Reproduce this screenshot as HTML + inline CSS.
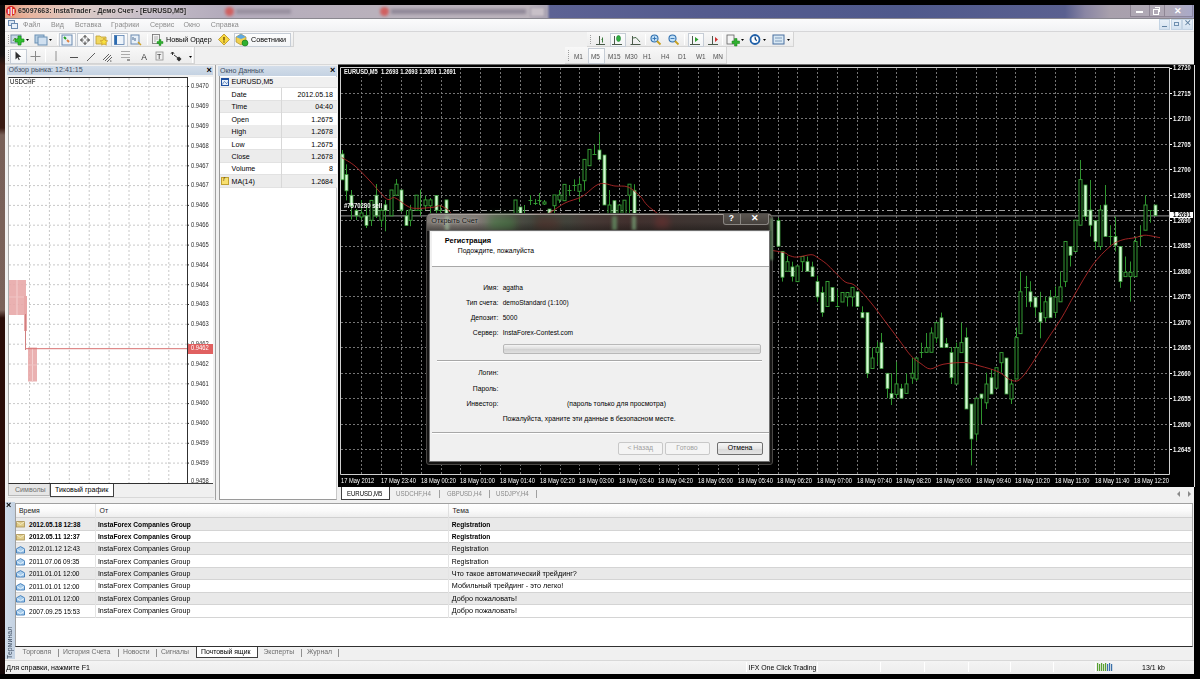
<!DOCTYPE html><html><head><meta charset="utf-8"><style>
html,body{margin:0;padding:0;}
body{width:1200px;height:679px;background:#000;position:relative;overflow:hidden;font-family:"Liberation Sans", sans-serif;}
.b{position:absolute;box-sizing:border-box;}
.t{position:absolute;white-space:nowrap;line-height:1.2;}
svg{position:absolute;}
</style></head><body><div style="position:absolute;left:0;top:0;width:1200px;height:679px;filter:blur(0.4px);">
<div class="b" style="left:0px;top:0px;width:5px;height:679px;background:linear-gradient(#0a0a0a 0,#151010 55px,#3a1a12 65px,#3a1a12 128px,#786058 135px,#7a625a 310px,#2a0c08 318px,#2a0c08 560px,#140808 679px);"></div>
<div class="b" style="left:0px;top:0px;width:1200px;height:5px;background:#000;"></div>
<div class="b" style="left:5px;top:5px;width:1189px;height:13px;background:linear-gradient(90deg,#e39a7c 0px,#e8b49e 25px,#dccac6 75px,#c4bcc8 145px,#b4acbc 215px,#bab2bc 400px,#bcb4bc 525px,#aaa4b4 542px,#5c6294 545px,#545b8e 700px,#4f598c 900px,#5a6090 1060px,#8a86a4 1080px,#a8a0ac 1105px,#aaa2b0 1160px,#a0a0c4 1189px);"></div>
<div class="b" style="left:6px;top:6px;width:10px;height:10px;border-radius:50%;background:#d42020;"></div>
<div class="t" style="left:7.5px;top:5.5px;font-size:9px;color:#fff;font-weight:bold;">ı|ı</div>
<div class="t" style="left:18px;top:7.15px;font-size:7.25px;color:#2a2a2a;font-weight:bold;text-shadow:0 0 3px rgba(255,240,230,0.6);transform:scaleX(0.966);transform-origin:left center;">65097663: InstaTrader - Демо Счет - [EURUSD,M5]</div>
<div class="b" style="left:225px;top:7px;width:9px;height:9px;border-radius:50%;background:#d06060;filter:blur(1.6px);"></div>
<div class="b" style="left:236px;top:9px;width:55px;height:5px;background:#9890a0;filter:blur(1.5px);"></div>
<div class="b" style="left:380px;top:7px;width:9px;height:9px;border-radius:50%;background:#d06060;filter:blur(1.6px);"></div>
<div class="b" style="left:530px;top:7px;width:15px;height:10px;background:#c8c0c8;border:1px solid #a098a8;filter:blur(0.8px);"></div>
<div class="b" style="left:391px;top:9px;width:135px;height:5px;background:#908898;filter:blur(1.5px);"></div>
<div class="b" style="left:1130px;top:5px;width:20px;height:12px;background:rgba(255,255,255,0.08);border:1px solid rgba(80,70,90,0.35);border-top:none;"></div>
<div class="b" style="left:1150px;top:5px;width:15px;height:12px;background:rgba(255,255,255,0.08);border:1px solid rgba(80,70,90,0.35);border-top:none;border-left:none;"></div>
<div class="b" style="left:1165px;top:5px;width:28px;height:12px;background:rgba(255,255,255,0.10);border:1px solid rgba(80,70,90,0.35);border-top:none;border-left:none;"></div>
<div class="b" style="left:1136px;top:11px;width:7px;height:2px;background:#fff;"></div>
<div class="b" style="left:1152.5px;top:9px;width:6px;height:5.5px;border:1.5px solid #fff;"></div>
<div class="b" style="left:1155px;top:7px;width:5px;height:5px;border-top:1.2px solid #fff;border-right:1.2px solid #fff;"></div>
<div class="t" style="left:1174px;top:5.5px;font-size:9px;color:#fff;font-weight:bold;">✕</div>
<div class="b" style="left:5px;top:18px;width:1189px;height:14px;background:linear-gradient(#fbfbfc,#f1f2f4);border-top:1px solid #8a8890;border-bottom:1px solid #d6d6d8;"></div>
<div class="b" style="left:8px;top:20px;width:7px;height:6px;border:1px solid #6a8ab0;background:#dce8f4;"></div>
<div class="b" style="left:11px;top:23px;width:7px;height:6px;border:1px solid #6a8ab0;background:#e8f0f8;"></div>
<div class="t" style="left:23px;top:20.74px;font-size:7.1px;color:#8c8c8c;">Файл</div>
<div class="t" style="left:51px;top:20.74px;font-size:7.1px;color:#8c8c8c;">Вид</div>
<div class="t" style="left:75px;top:20.74px;font-size:7.1px;color:#8c8c8c;">Вставка</div>
<div class="t" style="left:111px;top:20.74px;font-size:7.1px;color:#8c8c8c;">Графики</div>
<div class="t" style="left:150px;top:20.74px;font-size:7.1px;color:#8c8c8c;">Сервис</div>
<div class="t" style="left:183.5px;top:20.74px;font-size:7.1px;color:#8c8c8c;">Окно</div>
<div class="t" style="left:210.8px;top:20.74px;font-size:7.1px;color:#8c8c8c;">Справка</div>
<div class="b" style="left:1159px;top:19px;width:11px;height:11px;background:linear-gradient(#e8f0f8,#d4e2f0);border:1px solid #c4d4e4;"></div>
<div class="b" style="left:1171px;top:19px;width:11px;height:11px;background:linear-gradient(#e8f0f8,#d4e2f0);border:1px solid #c4d4e4;"></div>
<div class="b" style="left:1182px;top:19px;width:11px;height:11px;background:linear-gradient(#e8f0f8,#d4e2f0);border:1px solid #c4d4e4;"></div>
<div class="b" style="left:1162px;top:26px;width:5px;height:1px;background:#6080a0;"></div>
<div class="b" style="left:1174px;top:22px;width:5px;height:4px;border:1px solid #7090b0;"></div>
<div class="t" style="left:1184px;top:18px;font-size:9px;color:#6080a0;">✕</div>
<div class="b" style="left:5px;top:32px;width:1189px;height:33px;background:#f0f0f0;"></div>
<div class="b" style="left:5px;top:64px;width:1189px;height:1px;background:#d8d8d8;"></div>
<div class="b" style="left:5px;top:32px;width:289px;height:15px;background:linear-gradient(#f8f8f8,#ececec);border-right:1px solid #d4d4d4;border-bottom:1px solid #d4d4d4;"></div>
<div class="b" style="left:8px;top:35px;width:1px;height:9px;border-left:1px dotted #a0a0a0;"></div>
<div class="b" style="left:5px;top:47px;width:190px;height:17px;background:linear-gradient(#f8f8f8,#ececec);border-right:1px solid #d4d4d4;border-bottom:1px solid #d4d4d4;"></div>
<div class="b" style="left:8px;top:50px;width:1px;height:11px;border-left:1px dotted #a0a0a0;"></div>
<div class="b" style="left:587px;top:32px;width:207px;height:15px;background:linear-gradient(#f8f8f8,#ececec);border-right:1px solid #d4d4d4;border-bottom:1px solid #d4d4d4;"></div>
<div class="b" style="left:590px;top:35px;width:1px;height:9px;border-left:1px dotted #a0a0a0;"></div>
<div class="b" style="left:565px;top:47px;width:162px;height:17px;background:linear-gradient(#f8f8f8,#ececec);border-right:1px solid #d4d4d4;border-bottom:1px solid #d4d4d4;"></div>
<div class="b" style="left:568px;top:50px;width:1px;height:11px;border-left:1px dotted #a0a0a0;"></div>
<div class="b" style="left:57px;top:34px;width:1px;height:11px;background:#c8c8c8;border-right:1px solid #fff;"></div>
<div class="b" style="left:147px;top:34px;width:1px;height:11px;background:#c8c8c8;border-right:1px solid #fff;"></div>
<div class="b" style="left:45px;top:49px;width:1px;height:13px;background:#c8c8c8;border-right:1px solid #fff;"></div>
<div class="b" style="left:192px;top:48px;width:1px;height:15px;background:#c8c8c8;border-right:1px solid #fff;"></div>
<div class="b" style="left:645px;top:34px;width:1px;height:11px;background:#c8c8c8;border-right:1px solid #fff;"></div>
<div class="b" style="left:684px;top:34px;width:1px;height:11px;background:#c8c8c8;border-right:1px solid #fff;"></div>
<div class="b" style="left:722px;top:34px;width:1px;height:11px;background:#c8c8c8;border-right:1px solid #fff;"></div>
<div class="b" style="left:59px;top:33px;width:17px;height:14px;border:1px solid #c6cdd6;background:linear-gradient(#fdfdfd,#f2f4f6);"></div>
<div class="b" style="left:77px;top:33px;width:17px;height:14px;border:1px solid #c6cdd6;background:linear-gradient(#fdfdfd,#f2f4f6);"></div>
<div class="b" style="left:111px;top:33px;width:17px;height:14px;border:1px solid #c6cdd6;background:linear-gradient(#fdfdfd,#f2f4f6);"></div>
<div class="b" style="left:234px;top:33px;width:57px;height:14px;border:1px solid #c6cdd6;background:linear-gradient(#fdfdfd,#f2f4f6);"></div>
<div class="b" style="left:10px;top:49px;width:17px;height:15px;border:1px solid #c6cdd6;background:linear-gradient(#fdfdfd,#f2f4f6);"></div>
<div class="b" style="left:610px;top:33px;width:16px;height:14px;border:1px solid #c6cdd6;background:linear-gradient(#fdfdfd,#f2f4f6);"></div>
<div class="b" style="left:688px;top:33px;width:16px;height:14px;border:1px solid #c6cdd6;background:linear-gradient(#fdfdfd,#f2f4f6);"></div>
<div class="b" style="left:588px;top:48px;width:17px;height:16px;border:1px solid #c6cdd6;background:linear-gradient(#fdfdfd,#f2f4f6);"></div>
<svg style="left:0;top:0" width="1200" height="70" viewBox="0 0 1200 70">
<g>
<!-- new chart -->
<rect x="11" y="35" width="10" height="8" fill="#c8d8e8" stroke="#7890a8" stroke-width="1"/>
<path d="M13 41 L15 38 L17 40 L19 37" stroke="#5a8a3a" fill="none"/>
<path d="M19 37 h3 v3 h3 v3 h-3 v3 h-3 v-3 h-3 v-3 h3z" fill="#30c030" stroke="#189018" stroke-width="0.7" transform="translate(-1,-1)"/>
<path d="M26 39 h3 l-1.5 2z" fill="#000"/>
<!-- profiles -->
<rect x="35" y="35" width="9" height="8" fill="#b8d0e4" stroke="#6a90b4"/>
<rect x="38" y="37" width="9" height="8" fill="#d0e0f0" stroke="#6a90b4"/>
<path d="M49 39 h3 l-1.5 2z" fill="#000"/>
<!-- market watch -->
<rect x="62" y="35" width="10" height="10" fill="#e8f0f8" stroke="#6a8ab0"/>
<path d="M64 37 l2 2" stroke="#20a020" stroke-width="2"/><path d="M67 40 l2 2" stroke="#e08040" stroke-width="2"/>
<!-- crosshair -->
<path d="M85 35.5 v3 M85 41.5 v3 M80.5 40 h3 M86.5 40 h3" stroke="#303030" stroke-width="1"/>
<path d="M83 37.5 L85 35.5 L87 37.5 M83 42.5 L85 44.5 L87 42.5 M82.5 38 L80.5 40 L82.5 42 M87.5 38 L89.5 40 L87.5 42" stroke="#404040" stroke-width="0.9" fill="none"/>
<!-- folder star -->
<path d="M96 36 h4 l1 1 h5 v7 h-10z" fill="#f0d860" stroke="#c0a030" stroke-width="0.8"/>
<path d="M104 38 l1.2 2.5 2.6 .3 -2 1.8 .6 2.6 -2.4 -1.3 -2.4 1.3 .6 -2.6 -2 -1.8 2.6 -.3z" fill="#f8e040" stroke="#c09020" stroke-width="0.6"/>
<!-- navigator -->
<rect x="114.5" y="35.5" width="9.5" height="9" fill="#eef4fa" stroke="#5a80b0" stroke-width="0.8"/>
<rect x="114.5" y="35.5" width="2.5" height="9" fill="#2a6ab0"/>
<!-- tester -->
<rect x="131" y="35" width="8" height="9" fill="#e8f0f8" stroke="#6a8ab0"/>
<path d="M133 37 v3 M135 38 v3" stroke="#4a6a90"/>
<path d="M138 42 l3 3" stroke="#d0a020" stroke-width="1.5"/>
<!-- new order -->
<rect x="152.5" y="34.5" width="7" height="9" fill="#f4f4f4" stroke="#707070" stroke-width="0.8"/>
<path d="M154 37 h4 M154 39 h4 M154 41 h2" stroke="#909090" stroke-width="0.7"/>
<path d="M157 41.5 h2 v-2 h2 v2 h2 v2 h-2 v2 h-2 v-2 h-2z" fill="#30b030" stroke="#108010" stroke-width="0.4"/>
<!-- diamond -->
<path d="M224 34 l5.5 5.5 -5.5 5.5 -5.5 -5.5z" fill="#f8d840" stroke="#b89020" stroke-width="0.8"/>
<path d="M224 37 v3.5" stroke="#604000" stroke-width="1.3"/><circle cx="224" cy="42" r="0.7" fill="#604000"/>
<!-- experts -->
<path d="M236 37 l5 -3 5 3 v5 l-5 3 -5 -3z" fill="#f0d050" stroke="#a08020" stroke-width="0.6"/>
<path d="M236 37 l5 -3 5 3 -5 2z" fill="#60a8e0"/>
<circle cx="245" cy="43" r="3" fill="#30b030" stroke="#107010" stroke-width="0.6"/>
</g>
<g>
<!-- toolbar 2 -->
<path d="M15.5 51.5 v8 l2 -2 1.3 2.8 1 -.5 -1.3 -2.7 h2.8z" fill="#303030"/>
<path d="M35.5 51 v10 M30.5 56.5 h10" stroke="#8a8a8a" stroke-width="1"/>
<path d="M56 51 v10" stroke="#909090" stroke-width="1"/>
<path d="M70 57.5 h8" stroke="#505050" stroke-width="1"/>
<path d="M87 61 l8 -8" stroke="#606060" stroke-width="1"/>
<path d="M103 60 l6 -6 M105 61 l6 -6 M107 62 l5 -5" stroke="#505050" stroke-width="0.9"/>
<text x="110" y="62" font-size="4" fill="#303030" font-family="Liberation Sans">c</text>
<path d="M121 51.5 h9 M121 54.5 h9 M121 57.5 h9" stroke="#8a8a8a" stroke-width="0.7"/><path d="M127 60 h3" stroke="#404040" stroke-width="1"/>
<text x="141.3" y="60.3" font-size="8.5" fill="#303030" font-family="Liberation Sans">A</text>
<rect x="156" y="52" width="7" height="8" fill="#f0f0f0" stroke="#909090" stroke-width="0.8"/>
<text x="157" y="59" font-size="7" fill="#202020" font-family="Liberation Sans">T</text>
<path d="M172.5 52 v3 M171 53.5 l1.5 -1.5 1.5 1.5 M174 55 l4 3" stroke="#303030" stroke-width="1"/><path d="M179 56.5 l2.5 2.5 -2.5 2.5 -2.5 -2.5z" fill="#303030"/>
<path d="M189 56 h3 l-1.5 2z" fill="#000"/>
</g>
<g>
<!-- right toolbar -->
<path d="M599.5 36 v8.5 M596 44.5 h9" stroke="#4a5a4a" stroke-width="1"/>
<path d="M602.5 37.5 v5 M601.5 39.5 h1" stroke="#3a7a3a" stroke-width="1"/>
<path d="M614.5 36 v8.5 M612 44.5 h10" stroke="#4a5a4a" stroke-width="1"/>
<ellipse cx="618.5" cy="38.5" rx="2" ry="3" fill="#30b040" stroke="#208030" stroke-width="0.6"/>
<path d="M632.5 36 v8.5 M630.5 44.5 h10" stroke="#4a5a4a" stroke-width="1"/>
<path d="M633 38 L636 37.5 L640 42" stroke="#4a6a4a" stroke-width="1" fill="none"/>
<circle cx="654.5" cy="38.5" r="3.5" fill="#c0e0f8" stroke="#3070b0" stroke-width="1.1"/>
<path d="M657 41 l3.5 3.5" stroke="#c8a020" stroke-width="1.8"/>
<path d="M652.5 38.5 h4 M654.5 36.5 v4" stroke="#3070b0" stroke-width="0.9"/>
<circle cx="672.5" cy="38.5" r="3.5" fill="#c0e0f8" stroke="#3070b0" stroke-width="1.1"/>
<path d="M675 41 l3.5 3.5" stroke="#c8a020" stroke-width="1.8"/>
<path d="M670.5 38.5 h4" stroke="#3070b0" stroke-width="0.9"/>
<path d="M690 44.5 h10 M692.5 36 v8.5" stroke="#4a5a4a" stroke-width="1"/>
<path d="M695 37 l3.5 2.5 -3.5 2.5z" fill="#30a030"/>
<path d="M708 44.5 h10 M712.5 36 v8.5" stroke="#4a5a4a" stroke-width="1"/>
<path d="M715 37 l3 2.5 -3 2.5z" fill="#d03030"/>
<rect x="727" y="35" width="7" height="9" fill="#f4f4f4" stroke="#606060" stroke-width="0.8"/>
<path d="M732 41 h2.5 v-2.5 h2.5 v2.5 h2.5 v2.5 h-2.5 v2.5 h-2.5 v-2.5 h-2.5z" fill="#30b030" stroke="#108010" stroke-width="0.5"/>
<path d="M741 39 h3 l-1.5 2z" fill="#000"/>
<circle cx="755" cy="39.5" r="4.5" fill="#fff" stroke="#2060a8" stroke-width="1.8"/>
<path d="M755 36.5 v3 l2 1.5" stroke="#2060a8" stroke-width="1"/>
<path d="M763 39 h3 l-1.5 2z" fill="#000"/>
<rect x="773" y="35" width="11" height="9" fill="#d8e8f4" stroke="#4a70a0" stroke-width="1"/>
<path d="M775 38 h7 M775 41 h7" stroke="#6a8ab0" stroke-width="0.8"/>
<path d="M787 39 h3 l-1.5 2z" fill="#000"/>
</g>
</svg>
<div class="t" style="left:166px;top:36.48px;font-size:7.2px;color:#000;">Новый Ордер</div>
<div class="t" style="left:251px;top:36.48px;font-size:7.2px;color:#000;">Советники</div>
<div class="t" style="left:574px;top:53.10px;font-size:7px;color:#505050;transform:scaleX(0.92);transform-origin:left center;">M1</div>
<div class="t" style="left:591px;top:53.10px;font-size:7px;color:#505050;transform:scaleX(0.92);transform-origin:left center;">M5</div>
<div class="t" style="left:607.5px;top:53.10px;font-size:7px;color:#505050;transform:scaleX(0.92);transform-origin:left center;">M15</div>
<div class="t" style="left:624.7px;top:53.10px;font-size:7px;color:#505050;transform:scaleX(0.92);transform-origin:left center;">M30</div>
<div class="t" style="left:643.4px;top:53.10px;font-size:7px;color:#505050;transform:scaleX(0.92);transform-origin:left center;">H1</div>
<div class="t" style="left:661px;top:53.10px;font-size:7px;color:#505050;transform:scaleX(0.92);transform-origin:left center;">H4</div>
<div class="t" style="left:678.4px;top:53.10px;font-size:7px;color:#505050;transform:scaleX(0.92);transform-origin:left center;">D1</div>
<div class="t" style="left:696px;top:53.10px;font-size:7px;color:#505050;transform:scaleX(0.92);transform-origin:left center;">W1</div>
<div class="t" style="left:712.6px;top:53.10px;font-size:7px;color:#505050;transform:scaleX(0.92);transform-origin:left center;">MN</div>
<div class="b" style="left:5px;top:65px;width:210px;height:435px;background:#f0f0f0;"></div>
<div class="b" style="left:7px;top:65.5px;width:206px;height:9.5px;background:linear-gradient(#d4deea,#c4d2e2);"></div>
<div class="t" style="left:8.5px;top:66.04px;font-size:7.1px;color:#3e4c60;">Обзор рынка: 12:41:15</div>
<div class="t" style="left:206.5px;top:64.90px;font-size:9px;color:#000;font-weight:bold;">×</div>
<div class="b" style="left:8px;top:76.5px;width:205px;height:407px;background:#fff;border-bottom:1px solid #404040;"></div>
<div class="b" style="left:8px;top:76.5px;width:180px;height:407px;border-top:1.5px solid #303030;border-left:1px solid #a8a8a8;border-right:1px solid #303030;border-bottom:1px solid #303030;"></div>
<svg style="left:0;top:0" width="215" height="500" viewBox="0 0 215 500"><path d="M29.5 78 V483" stroke="#c8c8c8" stroke-width="1" stroke-dasharray="2,2"/><path d="M49.4 78 V483" stroke="#c8c8c8" stroke-width="1" stroke-dasharray="2,2"/><path d="M69.3 78 V483" stroke="#c8c8c8" stroke-width="1" stroke-dasharray="2,2"/><path d="M89.2 78 V483" stroke="#c8c8c8" stroke-width="1" stroke-dasharray="2,2"/><path d="M109.1 78 V483" stroke="#c8c8c8" stroke-width="1" stroke-dasharray="2,2"/><path d="M129.0 78 V483" stroke="#c8c8c8" stroke-width="1" stroke-dasharray="2,2"/><path d="M148.9 78 V483" stroke="#c8c8c8" stroke-width="1" stroke-dasharray="2,2"/><path d="M168.8 78 V483" stroke="#c8c8c8" stroke-width="1" stroke-dasharray="2,2"/><path d="M9 86.5 H187" stroke="#c8c8c8" stroke-width="1" stroke-dasharray="2,2"/><path d="M187 86.5 h2" stroke="#303030" stroke-width="1"/><path d="M9 106.3 H187" stroke="#c8c8c8" stroke-width="1" stroke-dasharray="2,2"/><path d="M187 106.3 h2" stroke="#303030" stroke-width="1"/><path d="M9 126.1 H187" stroke="#c8c8c8" stroke-width="1" stroke-dasharray="2,2"/><path d="M187 126.1 h2" stroke="#303030" stroke-width="1"/><path d="M9 146.0 H187" stroke="#c8c8c8" stroke-width="1" stroke-dasharray="2,2"/><path d="M187 146.0 h2" stroke="#303030" stroke-width="1"/><path d="M9 165.8 H187" stroke="#c8c8c8" stroke-width="1" stroke-dasharray="2,2"/><path d="M187 165.8 h2" stroke="#303030" stroke-width="1"/><path d="M9 185.6 H187" stroke="#c8c8c8" stroke-width="1" stroke-dasharray="2,2"/><path d="M187 185.6 h2" stroke="#303030" stroke-width="1"/><path d="M9 205.4 H187" stroke="#c8c8c8" stroke-width="1" stroke-dasharray="2,2"/><path d="M187 205.4 h2" stroke="#303030" stroke-width="1"/><path d="M9 225.2 H187" stroke="#c8c8c8" stroke-width="1" stroke-dasharray="2,2"/><path d="M187 225.2 h2" stroke="#303030" stroke-width="1"/><path d="M9 245.1 H187" stroke="#c8c8c8" stroke-width="1" stroke-dasharray="2,2"/><path d="M187 245.1 h2" stroke="#303030" stroke-width="1"/><path d="M9 264.9 H187" stroke="#c8c8c8" stroke-width="1" stroke-dasharray="2,2"/><path d="M187 264.9 h2" stroke="#303030" stroke-width="1"/><path d="M9 284.7 H187" stroke="#c8c8c8" stroke-width="1" stroke-dasharray="2,2"/><path d="M187 284.7 h2" stroke="#303030" stroke-width="1"/><path d="M9 304.5 H187" stroke="#c8c8c8" stroke-width="1" stroke-dasharray="2,2"/><path d="M187 304.5 h2" stroke="#303030" stroke-width="1"/><path d="M9 324.3 H187" stroke="#c8c8c8" stroke-width="1" stroke-dasharray="2,2"/><path d="M187 324.3 h2" stroke="#303030" stroke-width="1"/><path d="M9 344.2 H187" stroke="#c8c8c8" stroke-width="1" stroke-dasharray="2,2"/><path d="M187 344.2 h2" stroke="#303030" stroke-width="1"/><path d="M9 364.0 H187" stroke="#c8c8c8" stroke-width="1" stroke-dasharray="2,2"/><path d="M187 364.0 h2" stroke="#303030" stroke-width="1"/><path d="M9 383.8 H187" stroke="#c8c8c8" stroke-width="1" stroke-dasharray="2,2"/><path d="M187 383.8 h2" stroke="#303030" stroke-width="1"/><path d="M9 403.6 H187" stroke="#c8c8c8" stroke-width="1" stroke-dasharray="2,2"/><path d="M187 403.6 h2" stroke="#303030" stroke-width="1"/><path d="M9 423.4 H187" stroke="#c8c8c8" stroke-width="1" stroke-dasharray="2,2"/><path d="M187 423.4 h2" stroke="#303030" stroke-width="1"/><path d="M9 443.3 H187" stroke="#c8c8c8" stroke-width="1" stroke-dasharray="2,2"/><path d="M187 443.3 h2" stroke="#303030" stroke-width="1"/><path d="M9 463.1 H187" stroke="#c8c8c8" stroke-width="1" stroke-dasharray="2,2"/><path d="M187 463.1 h2" stroke="#303030" stroke-width="1"/><rect x="9" y="280" width="17" height="35" fill="#e8a8a8" opacity="0.9"/><path d="M17 280 v35" stroke="#f4d0d0" stroke-width="1"/><path d="M9 297 h17" stroke="#f0c4c4" stroke-width="1"/><rect x="24" y="296" width="3" height="35" fill="#e8a8a8"/><path d="M25.5 314 v36" stroke="#d08080" stroke-width="1"/><rect x="28" y="347.5" width="9" height="34" fill="#e8a8a8" opacity="0.9"/><path d="M32.5 348 v34" stroke="#f4d0d0" stroke-width="1"/><path d="M28 365 h9" stroke="#f0c4c4" stroke-width="1"/><path d="M26 348.7 H187" stroke="#d87070" stroke-width="1"/></svg>
<div class="t" style="left:191px;top:82.36px;font-size:6.9px;color:#303030;transform:scaleX(0.84);transform-origin:left center;">0.9470</div>
<div class="t" style="left:191px;top:102.18px;font-size:6.9px;color:#303030;transform:scaleX(0.84);transform-origin:left center;">0.9469</div>
<div class="t" style="left:191px;top:122.00px;font-size:6.9px;color:#303030;transform:scaleX(0.84);transform-origin:left center;">0.9469</div>
<div class="t" style="left:191px;top:141.82px;font-size:6.9px;color:#303030;transform:scaleX(0.84);transform-origin:left center;">0.9468</div>
<div class="t" style="left:191px;top:161.64px;font-size:6.9px;color:#303030;transform:scaleX(0.84);transform-origin:left center;">0.9467</div>
<div class="t" style="left:191px;top:181.46px;font-size:6.9px;color:#303030;transform:scaleX(0.84);transform-origin:left center;">0.9467</div>
<div class="t" style="left:191px;top:201.28px;font-size:6.9px;color:#303030;transform:scaleX(0.84);transform-origin:left center;">0.9466</div>
<div class="t" style="left:191px;top:221.10px;font-size:6.9px;color:#303030;transform:scaleX(0.84);transform-origin:left center;">0.9466</div>
<div class="t" style="left:191px;top:240.92px;font-size:6.9px;color:#303030;transform:scaleX(0.84);transform-origin:left center;">0.9465</div>
<div class="t" style="left:191px;top:260.74px;font-size:6.9px;color:#303030;transform:scaleX(0.84);transform-origin:left center;">0.9464</div>
<div class="t" style="left:191px;top:280.56px;font-size:6.9px;color:#303030;transform:scaleX(0.84);transform-origin:left center;">0.9464</div>
<div class="t" style="left:191px;top:300.38px;font-size:6.9px;color:#303030;transform:scaleX(0.84);transform-origin:left center;">0.9463</div>
<div class="t" style="left:191px;top:320.20px;font-size:6.9px;color:#303030;transform:scaleX(0.84);transform-origin:left center;">0.9463</div>
<div class="t" style="left:191px;top:339.56px;font-size:6.9px;color:#303030;transform:scaleX(0.84);transform-origin:left center;">0.9462</div>
<div class="t" style="left:191px;top:359.84px;font-size:6.9px;color:#303030;transform:scaleX(0.84);transform-origin:left center;">0.9462</div>
<div class="t" style="left:191px;top:379.66px;font-size:6.9px;color:#303030;transform:scaleX(0.84);transform-origin:left center;">0.9461</div>
<div class="t" style="left:191px;top:399.48px;font-size:6.9px;color:#303030;transform:scaleX(0.84);transform-origin:left center;">0.9460</div>
<div class="t" style="left:191px;top:419.30px;font-size:6.9px;color:#303030;transform:scaleX(0.84);transform-origin:left center;">0.9460</div>
<div class="t" style="left:191px;top:439.12px;font-size:6.9px;color:#303030;transform:scaleX(0.84);transform-origin:left center;">0.9459</div>
<div class="t" style="left:191px;top:458.94px;font-size:6.9px;color:#303030;transform:scaleX(0.84);transform-origin:left center;">0.9459</div>
<div class="t" style="left:191px;top:476.86px;font-size:6.9px;color:#303030;transform:scaleX(0.84);transform-origin:left center;">0.9458</div>
<div class="b" style="left:188px;top:343.5px;width:25px;height:10px;background:#e06060;"></div>
<div class="t" style="left:191px;top:344.36px;font-size:6.9px;color:#fff;transform:scaleX(0.84);transform-origin:left center;">0.9462</div>
<div class="t" style="left:10.3px;top:77.94px;font-size:7.1px;color:#000;transform:scaleX(0.86);transform-origin:left center;">USDCHF</div>
<div class="b" style="left:8px;top:484px;width:206px;height:13px;background:#f0f0f0;"></div>
<div class="b" style="left:49.5px;top:484px;width:64.5px;height:12.5px;background:#fff;border:1px solid #404040;border-top:none;border-bottom-width:1.5px;"></div>
<div class="b" style="left:7.5px;top:484px;width:42px;height:12px;background:#e6e6e6;border:1px solid #b8b8b8;border-top:none;"></div>
<div class="t" style="left:15px;top:486.24px;font-size:7.1px;color:#707070;">Символы</div>
<div class="t" style="left:55px;top:486.24px;font-size:7.1px;color:#000;">Тиковый график</div>
<div class="b" style="left:8px;top:497px;width:206px;height:1px;background:#d8d8d8;"></div>
<div class="b" style="left:215px;top:65px;width:1px;height:435px;background:#a0a0a0;"></div>
<div class="b" style="left:216px;top:65px;width:122px;height:435px;background:#f0f0f0;"></div>
<div class="b" style="left:218px;top:66px;width:119px;height:9.5px;background:linear-gradient(#d4deea,#c4d2e2);"></div>
<div class="t" style="left:220px;top:66.54px;font-size:7.1px;color:#3e4c60;">Окно Данных</div>
<div class="t" style="left:330px;top:65.40px;font-size:9px;color:#000;font-weight:bold;">×</div>
<div class="b" style="left:218.5px;top:76px;width:118.5px;height:424px;background:#fff;border-left:1px solid #9a9a9a;border-right:1px solid #c8c8c8;border-bottom:1px solid #9a9a9a;"></div>
<div class="b" style="left:219.5px;top:76.5px;width:117px;height:11.7px;background:#f0f0f0;border-bottom:1px solid #e0e0e0;"></div>
<div class="b" style="left:221px;top:78px;width:8px;height:8px;border:1px solid #2050a0;background:#e8f0fa;"></div>
<div class="b" style="left:221px;top:78px;width:8px;height:2px;background:#2050a0;"></div>
<svg style="left:221px;top:78px" width="9" height="9" viewBox="0 0 9 9"><path d="M1.5 6.5 Q3 2 4.5 4.5 T7.5 3" stroke="#3a6ab0" stroke-width="0.8" fill="none"/></svg>
<div class="t" style="left:231.5px;top:77.74px;font-size:7.1px;color:#000;">EURUSD,M5</div>
<div class="b" style="left:219.5px;top:88.2px;width:117px;height:12.5px;background:#ffffff;border-bottom:1px solid #e2e2e2;"></div>
<div class="t" style="left:231.6px;top:90.94px;font-size:7.1px;color:#000;">Date</div>
<div class="t" style="right:867px;top:90.94px;font-size:7.1px;color:#000;">2012.05.18</div>
<div class="b" style="left:219.5px;top:100.62px;width:117px;height:12.5px;background:#ececec;border-bottom:1px solid #e2e2e2;"></div>
<div class="t" style="left:231.6px;top:103.36px;font-size:7.1px;color:#000;">Time</div>
<div class="t" style="right:867px;top:103.36px;font-size:7.1px;color:#000;">04:40</div>
<div class="b" style="left:219.5px;top:113.04px;width:117px;height:12.5px;background:#ffffff;border-bottom:1px solid #e2e2e2;"></div>
<div class="t" style="left:231.6px;top:115.78px;font-size:7.1px;color:#000;">Open</div>
<div class="t" style="right:867px;top:115.78px;font-size:7.1px;color:#000;">1.2675</div>
<div class="b" style="left:219.5px;top:125.46000000000001px;width:117px;height:12.5px;background:#ececec;border-bottom:1px solid #e2e2e2;"></div>
<div class="t" style="left:231.6px;top:128.20px;font-size:7.1px;color:#000;">High</div>
<div class="t" style="right:867px;top:128.20px;font-size:7.1px;color:#000;">1.2678</div>
<div class="b" style="left:219.5px;top:137.88px;width:117px;height:12.5px;background:#ffffff;border-bottom:1px solid #e2e2e2;"></div>
<div class="t" style="left:231.6px;top:140.62px;font-size:7.1px;color:#000;">Low</div>
<div class="t" style="right:867px;top:140.62px;font-size:7.1px;color:#000;">1.2675</div>
<div class="b" style="left:219.5px;top:150.3px;width:117px;height:12.5px;background:#ececec;border-bottom:1px solid #e2e2e2;"></div>
<div class="t" style="left:231.6px;top:153.04px;font-size:7.1px;color:#000;">Close</div>
<div class="t" style="right:867px;top:153.04px;font-size:7.1px;color:#000;">1.2678</div>
<div class="b" style="left:219.5px;top:162.72px;width:117px;height:12.5px;background:#ffffff;border-bottom:1px solid #e2e2e2;"></div>
<div class="t" style="left:231.6px;top:165.46px;font-size:7.1px;color:#000;">Volume</div>
<div class="t" style="right:867px;top:165.46px;font-size:7.1px;color:#000;">8</div>
<div class="b" style="left:219.5px;top:175.14px;width:117px;height:12.5px;background:#ececec;border-bottom:1px solid #e2e2e2;"></div>
<div class="t" style="left:231.6px;top:177.88px;font-size:7.1px;color:#000;">MA(14)</div>
<div class="t" style="right:867px;top:177.88px;font-size:7.1px;color:#000;">1.2684</div>
<div class="b" style="left:280.5px;top:88.2px;width:1px;height:99.5px;background:#d8d8d8;"></div>
<div class="b" style="left:221px;top:177.2px;width:8px;height:8px;background:#f8e070;border:1px solid #c0a030;"></div>
<div class="t" style="left:223px;top:175.8px;font-size:6px;color:#604000;font-style:italic;">f</div>
<svg style="left:0;top:0" width="1200" height="500" viewBox="0 0 1200 500"><rect x="338" y="64.5" width="856" height="422.5" fill="#000"/><path d="M361.5 68 V474" stroke="#747474" stroke-width="1" stroke-dasharray="2,2"/><path d="M381.5 68 V474" stroke="#747474" stroke-width="1" stroke-dasharray="2,2"/><path d="M401.5 68 V474" stroke="#747474" stroke-width="1" stroke-dasharray="2,2"/><path d="M421.5 68 V474" stroke="#747474" stroke-width="1" stroke-dasharray="2,2"/><path d="M441.5 68 V474" stroke="#747474" stroke-width="1" stroke-dasharray="2,2"/><path d="M460.5 68 V474" stroke="#747474" stroke-width="1" stroke-dasharray="2,2"/><path d="M480.5 68 V474" stroke="#747474" stroke-width="1" stroke-dasharray="2,2"/><path d="M500.5 68 V474" stroke="#747474" stroke-width="1" stroke-dasharray="2,2"/><path d="M520.5 68 V474" stroke="#747474" stroke-width="1" stroke-dasharray="2,2"/><path d="M540.5 68 V474" stroke="#747474" stroke-width="1" stroke-dasharray="2,2"/><path d="M560.5 68 V474" stroke="#747474" stroke-width="1" stroke-dasharray="2,2"/><path d="M579.5 68 V474" stroke="#747474" stroke-width="1" stroke-dasharray="2,2"/><path d="M599.5 68 V474" stroke="#747474" stroke-width="1" stroke-dasharray="2,2"/><path d="M619.5 68 V474" stroke="#747474" stroke-width="1" stroke-dasharray="2,2"/><path d="M639.5 68 V474" stroke="#747474" stroke-width="1" stroke-dasharray="2,2"/><path d="M659.5 68 V474" stroke="#747474" stroke-width="1" stroke-dasharray="2,2"/><path d="M678.5 68 V474" stroke="#747474" stroke-width="1" stroke-dasharray="2,2"/><path d="M698.5 68 V474" stroke="#747474" stroke-width="1" stroke-dasharray="2,2"/><path d="M718.5 68 V474" stroke="#747474" stroke-width="1" stroke-dasharray="2,2"/><path d="M738.5 68 V474" stroke="#747474" stroke-width="1" stroke-dasharray="2,2"/><path d="M758.5 68 V474" stroke="#747474" stroke-width="1" stroke-dasharray="2,2"/><path d="M778.5 68 V474" stroke="#747474" stroke-width="1" stroke-dasharray="2,2"/><path d="M797.5 68 V474" stroke="#747474" stroke-width="1" stroke-dasharray="2,2"/><path d="M817.5 68 V474" stroke="#747474" stroke-width="1" stroke-dasharray="2,2"/><path d="M837.5 68 V474" stroke="#747474" stroke-width="1" stroke-dasharray="2,2"/><path d="M857.5 68 V474" stroke="#747474" stroke-width="1" stroke-dasharray="2,2"/><path d="M877.5 68 V474" stroke="#747474" stroke-width="1" stroke-dasharray="2,2"/><path d="M896.5 68 V474" stroke="#747474" stroke-width="1" stroke-dasharray="2,2"/><path d="M916.5 68 V474" stroke="#747474" stroke-width="1" stroke-dasharray="2,2"/><path d="M936.5 68 V474" stroke="#747474" stroke-width="1" stroke-dasharray="2,2"/><path d="M956.5 68 V474" stroke="#747474" stroke-width="1" stroke-dasharray="2,2"/><path d="M976.5 68 V474" stroke="#747474" stroke-width="1" stroke-dasharray="2,2"/><path d="M996.5 68 V474" stroke="#747474" stroke-width="1" stroke-dasharray="2,2"/><path d="M1015.5 68 V474" stroke="#747474" stroke-width="1" stroke-dasharray="2,2"/><path d="M1035.5 68 V474" stroke="#747474" stroke-width="1" stroke-dasharray="2,2"/><path d="M1055.5 68 V474" stroke="#747474" stroke-width="1" stroke-dasharray="2,2"/><path d="M1075.5 68 V474" stroke="#747474" stroke-width="1" stroke-dasharray="2,2"/><path d="M1095.5 68 V474" stroke="#747474" stroke-width="1" stroke-dasharray="2,2"/><path d="M1114.5 68 V474" stroke="#747474" stroke-width="1" stroke-dasharray="2,2"/><path d="M1134.5 68 V474" stroke="#747474" stroke-width="1" stroke-dasharray="2,2"/><path d="M1154.5 68 V474" stroke="#747474" stroke-width="1" stroke-dasharray="2,2"/><path d="M341 93.5 H1169" stroke="#747474" stroke-width="1" stroke-dasharray="2,2"/><path d="M341 118.5 H1169" stroke="#747474" stroke-width="1" stroke-dasharray="2,2"/><path d="M341 144.5 H1169" stroke="#747474" stroke-width="1" stroke-dasharray="2,2"/><path d="M341 169.5 H1169" stroke="#747474" stroke-width="1" stroke-dasharray="2,2"/><path d="M341 195.5 H1169" stroke="#747474" stroke-width="1" stroke-dasharray="2,2"/><path d="M341 220.5 H1169" stroke="#747474" stroke-width="1" stroke-dasharray="2,2"/><path d="M341 246.5 H1169" stroke="#747474" stroke-width="1" stroke-dasharray="2,2"/><path d="M341 271.5 H1169" stroke="#747474" stroke-width="1" stroke-dasharray="2,2"/><path d="M341 296.5 H1169" stroke="#747474" stroke-width="1" stroke-dasharray="2,2"/><path d="M341 322.5 H1169" stroke="#747474" stroke-width="1" stroke-dasharray="2,2"/><path d="M341 347.5 H1169" stroke="#747474" stroke-width="1" stroke-dasharray="2,2"/><path d="M341 373.5 H1169" stroke="#747474" stroke-width="1" stroke-dasharray="2,2"/><path d="M341 398.5 H1169" stroke="#747474" stroke-width="1" stroke-dasharray="2,2"/><path d="M341 424.5 H1169" stroke="#747474" stroke-width="1" stroke-dasharray="2,2"/><path d="M341 449.5 H1169" stroke="#747474" stroke-width="1" stroke-dasharray="2,2"/><path d="M1169 68.5 h3" stroke="#fff" stroke-width="1"/><path d="M1169 93.5 h3" stroke="#fff" stroke-width="1"/><path d="M1169 118.5 h3" stroke="#fff" stroke-width="1"/><path d="M1169 144.5 h3" stroke="#fff" stroke-width="1"/><path d="M1169 169.5 h3" stroke="#fff" stroke-width="1"/><path d="M1169 195.5 h3" stroke="#fff" stroke-width="1"/><path d="M1169 220.5 h3" stroke="#fff" stroke-width="1"/><path d="M1169 246.5 h3" stroke="#fff" stroke-width="1"/><path d="M1169 271.5 h3" stroke="#fff" stroke-width="1"/><path d="M1169 296.5 h3" stroke="#fff" stroke-width="1"/><path d="M1169 322.5 h3" stroke="#fff" stroke-width="1"/><path d="M1169 347.5 h3" stroke="#fff" stroke-width="1"/><path d="M1169 373.5 h3" stroke="#fff" stroke-width="1"/><path d="M1169 398.5 h3" stroke="#fff" stroke-width="1"/><path d="M1169 424.5 h3" stroke="#fff" stroke-width="1"/><path d="M1169 449.5 h3" stroke="#fff" stroke-width="1"/><path d="M340.5 67.5 H1169.5 V474.5 H340.5 Z" fill="none" stroke="#d0d0d0" stroke-width="1"/><path d="M341 210.5 H1169" stroke="#a0a0a0" stroke-width="1" stroke-dasharray="6,3,2,3"/><path d="M341 215.8 H1169" stroke="#7a7a7a" stroke-width="1.3"/><path d="M342.5 150 V180" stroke="#2e942e" stroke-width="1"/><rect x="341" y="154" width="3" height="25.80000000000001" fill="#d4f8d4" stroke="#3a9e3a" stroke-width="0.8"/><path d="M346.5 164.3 V200.4" stroke="#2e942e" stroke-width="1"/><rect x="345" y="174.6" width="3" height="16.200000000000017" fill="#d4f8d4" stroke="#3a9e3a" stroke-width="0.8"/><path d="M351.5 190 V219.5" stroke="#2e942e" stroke-width="1"/><rect x="350" y="195.2" width="3" height="11.100000000000023" fill="#d4f8d4" stroke="#3a9e3a" stroke-width="0.8"/><path d="M356.5 209 V220" stroke="#2e942e" stroke-width="1"/><rect x="355" y="210.4" width="3" height="5.400000000000006" fill="#d4f8d4" stroke="#3a9e3a" stroke-width="0.8"/><path d="M361.5 200 V220" stroke="#2e942e" stroke-width="1"/><rect x="360" y="213" width="3" height="4" fill="#000" stroke="#349a34" stroke-width="1"/><path d="M366.5 205 V228" stroke="#2e942e" stroke-width="1"/><rect x="365" y="215.8" width="3" height="9.599999999999994" fill="#d4f8d4" stroke="#3a9e3a" stroke-width="0.8"/><path d="M371.5 200 V226" stroke="#2e942e" stroke-width="1"/><rect x="370" y="200.4" width="3" height="19.900000000000006" fill="#000" stroke="#349a34" stroke-width="1"/><path d="M376.5 184 V218" stroke="#2e942e" stroke-width="1"/><rect x="375" y="195.2" width="3" height="20.600000000000023" fill="#d4f8d4" stroke="#3a9e3a" stroke-width="0.8"/><path d="M381.5 207 V227" stroke="#2e942e" stroke-width="1"/><rect x="380" y="210.4" width="3" height="9.900000000000006" fill="#000" stroke="#349a34" stroke-width="1"/><path d="M385.5 200 V231.3" stroke="#2e942e" stroke-width="1"/><rect x="384" y="204.8" width="3" height="5.599999999999994" fill="#d4f8d4" stroke="#3a9e3a" stroke-width="0.8"/><path d="M391.5 190 V216" stroke="#2e942e" stroke-width="1"/><rect x="390" y="190" width="3" height="25.80000000000001" fill="#000" stroke="#349a34" stroke-width="1"/><path d="M396.5 179 V196" stroke="#2e942e" stroke-width="1"/><rect x="395" y="184.2" width="3" height="11.0" fill="#000" stroke="#349a34" stroke-width="1"/><path d="M401.5 190 V212" stroke="#2e942e" stroke-width="1"/><rect x="400" y="190" width="3" height="20" fill="#d4f8d4" stroke="#3a9e3a" stroke-width="0.8"/><path d="M406.5 210 V226" stroke="#2e942e" stroke-width="1"/><rect x="405" y="215.8" width="3" height="9.599999999999994" fill="#d4f8d4" stroke="#3a9e3a" stroke-width="0.8"/><path d="M410.5 204.8 V226.2" stroke="#2e942e" stroke-width="1"/><rect x="409" y="210" width="3" height="10.300000000000011" fill="#000" stroke="#349a34" stroke-width="1"/><path d="M416.5 195 V211" stroke="#2e942e" stroke-width="1"/><rect x="415" y="195.2" width="3" height="15.200000000000017" fill="#000" stroke="#349a34" stroke-width="1"/><path d="M420.5 189.6 V216.1" stroke="#2e942e" stroke-width="1"/><path d="M418.5 210.5 h4" stroke="#349a34" stroke-width="1"/><path d="M425.5 195.5 V210.2" stroke="#2e942e" stroke-width="1"/><rect x="424" y="199.9" width="3" height="5.900000000000006" fill="#000" stroke="#349a34" stroke-width="1"/><path d="M430.5 198 V230" stroke="#2e942e" stroke-width="1"/><rect x="429" y="199.9" width="3" height="5.900000000000006" fill="#000" stroke="#349a34" stroke-width="1"/><path d="M436.5 195 V230" stroke="#2e942e" stroke-width="1"/><rect x="435" y="195.5" width="3" height="14.699999999999989" fill="#d4f8d4" stroke="#3a9e3a" stroke-width="0.8"/><path d="M440.5 205 V230" stroke="#2e942e" stroke-width="1"/><path d="M438.5 210.5 h4" stroke="#349a34" stroke-width="1"/><path d="M446.5 199.9 V230" stroke="#2e942e" stroke-width="1"/><rect x="445" y="199.9" width="3" height="30.099999999999994" fill="#d4f8d4" stroke="#3a9e3a" stroke-width="0.8"/><path d="M515.5 200 V230" stroke="#2e942e" stroke-width="1"/><rect x="514" y="200" width="3" height="30" fill="#000" stroke="#349a34" stroke-width="1"/><path d="M520.5 207 V230" stroke="#2e942e" stroke-width="1"/><rect x="519" y="207" width="3" height="23" fill="#d4f8d4" stroke="#3a9e3a" stroke-width="0.8"/><path d="M524.5 205 V230" stroke="#2e942e" stroke-width="1"/><rect x="523" y="215" width="3" height="15" fill="#000" stroke="#349a34" stroke-width="1"/><path d="M530.5 195 V205" stroke="#2e942e" stroke-width="1"/><path d="M528.5 200.5 h4" stroke="#349a34" stroke-width="1"/><path d="M535.5 199 V205" stroke="#2e942e" stroke-width="1"/><path d="M533.5 203.5 h4" stroke="#349a34" stroke-width="1"/><path d="M539.5 193 V205" stroke="#2e942e" stroke-width="1"/><path d="M537.5 200.5 h4" stroke="#349a34" stroke-width="1"/><path d="M544.5 200 V205" stroke="#2e942e" stroke-width="1"/><rect x="543" y="202" width="3" height="2" fill="#000" stroke="#349a34" stroke-width="1"/><path d="M549.5 209 V230" stroke="#2e942e" stroke-width="1"/><rect x="548" y="209" width="3" height="21" fill="#d4f8d4" stroke="#3a9e3a" stroke-width="0.8"/><path d="M554.5 195 V230" stroke="#2e942e" stroke-width="1"/><rect x="553" y="195" width="3" height="10.699999999999989" fill="#000" stroke="#349a34" stroke-width="1"/><path d="M559.5 190 V203" stroke="#2e942e" stroke-width="1"/><rect x="558" y="195" width="3" height="5" fill="#000" stroke="#349a34" stroke-width="1"/><path d="M564.5 184.4 V200.7" stroke="#2e942e" stroke-width="1"/><rect x="563" y="184.4" width="3" height="16.299999999999983" fill="#000" stroke="#349a34" stroke-width="1"/><path d="M569.5 185 V195.7" stroke="#2e942e" stroke-width="1"/><path d="M567.5 190.5 h4" stroke="#349a34" stroke-width="1"/><path d="M574.5 179.4 V191" stroke="#2e942e" stroke-width="1"/><path d="M572.5 185.5 h4" stroke="#349a34" stroke-width="1"/><path d="M579.5 178 V202" stroke="#2e942e" stroke-width="1"/><rect x="578" y="184.4" width="3" height="6.900000000000006" fill="#000" stroke="#349a34" stroke-width="1"/><path d="M584.5 159 V190.7" stroke="#2e942e" stroke-width="1"/><rect x="583" y="159.4" width="3" height="21.299999999999983" fill="#000" stroke="#349a34" stroke-width="1"/><path d="M589.5 149 V166" stroke="#2e942e" stroke-width="1"/><rect x="588" y="149.4" width="3" height="16.299999999999983" fill="#000" stroke="#349a34" stroke-width="1"/><path d="M594.5 144.4 V154.4" stroke="#2e942e" stroke-width="1"/><path d="M592.5 154.5 h4" stroke="#349a34" stroke-width="1"/><path d="M599.5 133.75 V160" stroke="#2e942e" stroke-width="1"/><rect x="598" y="150" width="3" height="9.400000000000006" fill="#d4f8d4" stroke="#3a9e3a" stroke-width="0.8"/><path d="M604.5 155 V205" stroke="#2e942e" stroke-width="1"/><rect x="603" y="155" width="3" height="50" fill="#d4f8d4" stroke="#3a9e3a" stroke-width="0.8"/><path d="M609.5 190 V230" stroke="#2e942e" stroke-width="1"/><rect x="608" y="205" width="3" height="25" fill="#000" stroke="#349a34" stroke-width="1"/><path d="M614.5 200.7 V230" stroke="#2e942e" stroke-width="1"/><rect x="613" y="200.7" width="3" height="29.30000000000001" fill="#d4f8d4" stroke="#3a9e3a" stroke-width="0.8"/><path d="M619.5 205 V230" stroke="#2e942e" stroke-width="1"/><rect x="618" y="205" width="3" height="25" fill="#000" stroke="#349a34" stroke-width="1"/><path d="M624.5 200.2 V230" stroke="#2e942e" stroke-width="1"/><rect x="623" y="200.2" width="3" height="29.80000000000001" fill="#000" stroke="#349a34" stroke-width="1"/><path d="M629.5 184.2 V230" stroke="#2e942e" stroke-width="1"/><rect x="628" y="184.2" width="3" height="11.0" fill="#000" stroke="#349a34" stroke-width="1"/><path d="M634.5 184.2 V230" stroke="#2e942e" stroke-width="1"/><rect x="633" y="190.3" width="3" height="39.69999999999999" fill="#d4f8d4" stroke="#3a9e3a" stroke-width="0.8"/><path d="M778.5 218 V246.2" stroke="#2e942e" stroke-width="1"/><rect x="777" y="220.5" width="3" height="25.69999999999999" fill="#d4f8d4" stroke="#3a9e3a" stroke-width="0.8"/><path d="M782.5 251 V281.6" stroke="#2e942e" stroke-width="1"/><rect x="781" y="251.4" width="3" height="25.799999999999983" fill="#d4f8d4" stroke="#3a9e3a" stroke-width="0.8"/><path d="M787.5 255.8 V271.3" stroke="#2e942e" stroke-width="1"/><rect x="786" y="261.7" width="3" height="9.600000000000023" fill="#000" stroke="#349a34" stroke-width="1"/><path d="M792.5 261.7 V281.6" stroke="#2e942e" stroke-width="1"/><rect x="791" y="266.9" width="3" height="9.5" fill="#d4f8d4" stroke="#3a9e3a" stroke-width="0.8"/><path d="M797.5 266 V281.6" stroke="#2e942e" stroke-width="1"/><rect x="796" y="266" width="3" height="15.600000000000023" fill="#000" stroke="#349a34" stroke-width="1"/><path d="M802.5 256 V271.3" stroke="#2e942e" stroke-width="1"/><rect x="801" y="256.5" width="3" height="5.199999999999989" fill="#000" stroke="#349a34" stroke-width="1"/><path d="M807.5 256.5 V271.3" stroke="#2e942e" stroke-width="1"/><rect x="806" y="261.7" width="3" height="9.600000000000023" fill="#d4f8d4" stroke="#3a9e3a" stroke-width="0.8"/><path d="M812.5 261.7 V276.4" stroke="#2e942e" stroke-width="1"/><rect x="811" y="266.9" width="3" height="9.5" fill="#d4f8d4" stroke="#3a9e3a" stroke-width="0.8"/><path d="M817.5 275.7 V302" stroke="#2e942e" stroke-width="1"/><rect x="816" y="281.6" width="3" height="15.399999999999977" fill="#d4f8d4" stroke="#3a9e3a" stroke-width="0.8"/><path d="M822.5 286.6 V316.8" stroke="#2e942e" stroke-width="1"/><rect x="821" y="292.5" width="3" height="19.899999999999977" fill="#d4f8d4" stroke="#3a9e3a" stroke-width="0.8"/><path d="M827.5 281.5 V306.5" stroke="#2e942e" stroke-width="1"/><rect x="826" y="281.5" width="3" height="25.0" fill="#000" stroke="#349a34" stroke-width="1"/><path d="M832.5 287.4 V301.4" stroke="#2e942e" stroke-width="1"/><rect x="831" y="287.4" width="3" height="14.0" fill="#d4f8d4" stroke="#3a9e3a" stroke-width="0.8"/><path d="M837.5 289.6 V307.2" stroke="#2e942e" stroke-width="1"/><path d="M835.5 306.5 h4" stroke="#349a34" stroke-width="1"/><path d="M842.5 292.5 V302" stroke="#2e942e" stroke-width="1"/><rect x="841" y="292.5" width="3" height="9.5" fill="#000" stroke="#349a34" stroke-width="1"/><path d="M847.5 292 V306.5" stroke="#2e942e" stroke-width="1"/><rect x="846" y="292.5" width="3" height="4.5" fill="#000" stroke="#349a34" stroke-width="1"/><path d="M852.5 287 V306.5" stroke="#2e942e" stroke-width="1"/><rect x="851" y="287.4" width="3" height="9.600000000000023" fill="#000" stroke="#349a34" stroke-width="1"/><path d="M857.5 291.8 V306.5" stroke="#2e942e" stroke-width="1"/><rect x="856" y="291.8" width="3" height="14.699999999999989" fill="#d4f8d4" stroke="#3a9e3a" stroke-width="0.8"/><path d="M862.5 306.3 V317.8" stroke="#2e942e" stroke-width="1"/><rect x="861" y="312.5" width="3" height="5.300000000000011" fill="#d4f8d4" stroke="#3a9e3a" stroke-width="0.8"/><path d="M867.5 312 V378" stroke="#2e942e" stroke-width="1"/><rect x="866" y="312.6" width="3" height="60.69999999999999" fill="#d4f8d4" stroke="#3a9e3a" stroke-width="0.8"/><path d="M872.5 347.5 V368.5" stroke="#2e942e" stroke-width="1"/><rect x="871" y="358" width="3" height="10.5" fill="#000" stroke="#349a34" stroke-width="1"/><path d="M877.5 341.7 V364.7" stroke="#2e942e" stroke-width="1"/><rect x="876" y="347.5" width="3" height="4.800000000000011" fill="#000" stroke="#349a34" stroke-width="1"/><path d="M881.5 333 V368.5" stroke="#2e942e" stroke-width="1"/><rect x="880" y="342.7" width="3" height="25.80000000000001" fill="#d4f8d4" stroke="#3a9e3a" stroke-width="0.8"/><path d="M887.5 373 V398.2" stroke="#2e942e" stroke-width="1"/><rect x="886" y="373.3" width="3" height="15.399999999999977" fill="#d4f8d4" stroke="#3a9e3a" stroke-width="0.8"/><path d="M891.5 373.3 V405" stroke="#2e942e" stroke-width="1"/><rect x="890" y="393.4" width="3" height="4.800000000000011" fill="#d4f8d4" stroke="#3a9e3a" stroke-width="0.8"/><path d="M896.5 361.8 V398.2" stroke="#2e942e" stroke-width="1"/><rect x="895" y="383.9" width="3" height="10.5" fill="#000" stroke="#349a34" stroke-width="1"/><path d="M901.5 383.9 V398.2" stroke="#2e942e" stroke-width="1"/><rect x="900" y="388.7" width="3" height="9.5" fill="#d4f8d4" stroke="#3a9e3a" stroke-width="0.8"/><path d="M906.5 373.3 V393.4" stroke="#2e942e" stroke-width="1"/><rect x="905" y="383.9" width="3" height="9.5" fill="#000" stroke="#349a34" stroke-width="1"/><path d="M912.5 358 V383.9" stroke="#2e942e" stroke-width="1"/><rect x="911" y="373.3" width="3" height="4.699999999999989" fill="#000" stroke="#349a34" stroke-width="1"/><path d="M916.5 358 V381" stroke="#2e942e" stroke-width="1"/><rect x="915" y="358" width="3" height="21" fill="#000" stroke="#349a34" stroke-width="1"/><path d="M921.5 342.7 V358" stroke="#2e942e" stroke-width="1"/><path d="M919.5 352.5 h4" stroke="#349a34" stroke-width="1"/><path d="M926.5 333 V353" stroke="#2e942e" stroke-width="1"/><rect x="925" y="347.5" width="3" height="4.800000000000011" fill="#000" stroke="#349a34" stroke-width="1"/><path d="M931.5 327.4 V352.3" stroke="#2e942e" stroke-width="1"/><rect x="930" y="333" width="3" height="19.30000000000001" fill="#000" stroke="#349a34" stroke-width="1"/><path d="M936.5 322 V342.7" stroke="#2e942e" stroke-width="1"/><rect x="935" y="322.6" width="3" height="15.299999999999955" fill="#000" stroke="#349a34" stroke-width="1"/><path d="M941.5 312.6 V347.5" stroke="#2e942e" stroke-width="1"/><rect x="940" y="317.8" width="3" height="29.69999999999999" fill="#d4f8d4" stroke="#3a9e3a" stroke-width="0.8"/><path d="M946.5 337.9 V347.5" stroke="#2e942e" stroke-width="1"/><rect x="945" y="343.6" width="3" height="3.8999999999999773" fill="#d4f8d4" stroke="#3a9e3a" stroke-width="0.8"/><path d="M951.5 347 V384" stroke="#2e942e" stroke-width="1"/><rect x="950" y="352.6" width="3" height="25.099999999999966" fill="#d4f8d4" stroke="#3a9e3a" stroke-width="0.8"/><path d="M956.5 342.6 V384" stroke="#2e942e" stroke-width="1"/><rect x="955" y="347.6" width="3" height="36.39999999999998" fill="#000" stroke="#349a34" stroke-width="1"/><path d="M961.5 322.6 V352.6" stroke="#2e942e" stroke-width="1"/><rect x="960" y="342.6" width="3" height="10.0" fill="#000" stroke="#349a34" stroke-width="1"/><path d="M966.5 327.6 V409" stroke="#2e942e" stroke-width="1"/><rect x="965" y="337.6" width="3" height="71.39999999999998" fill="#d4f8d4" stroke="#3a9e3a" stroke-width="0.8"/><path d="M971.5 404 V465.4" stroke="#2e942e" stroke-width="1"/><rect x="970" y="404" width="3" height="35" fill="#d4f8d4" stroke="#3a9e3a" stroke-width="0.8"/><path d="M976.5 398 V440.4" stroke="#2e942e" stroke-width="1"/><rect x="975" y="398.2" width="3" height="35.80000000000001" fill="#000" stroke="#349a34" stroke-width="1"/><path d="M981.5 394 V424" stroke="#2e942e" stroke-width="1"/><rect x="980" y="394" width="3" height="4.199999999999989" fill="#d4f8d4" stroke="#3a9e3a" stroke-width="0.8"/><path d="M986.5 372.7 V409" stroke="#2e942e" stroke-width="1"/><rect x="985" y="384" width="3" height="18.80000000000001" fill="#000" stroke="#349a34" stroke-width="1"/><path d="M991.5 369 V394" stroke="#2e942e" stroke-width="1"/><rect x="990" y="377.7" width="3" height="16.30000000000001" fill="#d4f8d4" stroke="#3a9e3a" stroke-width="0.8"/><path d="M996.5 367.7 V388.2" stroke="#2e942e" stroke-width="1"/><rect x="995" y="367.7" width="3" height="20.5" fill="#000" stroke="#349a34" stroke-width="1"/><path d="M1001.5 352.6 V372.7" stroke="#2e942e" stroke-width="1"/><rect x="1000" y="352.6" width="3" height="10.099999999999966" fill="#000" stroke="#349a34" stroke-width="1"/><path d="M1006.5 358 V394" stroke="#2e942e" stroke-width="1"/><rect x="1005" y="358" width="3" height="36" fill="#d4f8d4" stroke="#3a9e3a" stroke-width="0.8"/><path d="M1011.5 379 V404" stroke="#2e942e" stroke-width="1"/><rect x="1010" y="384" width="3" height="15" fill="#000" stroke="#349a34" stroke-width="1"/><path d="M1016.5 327.6 V379" stroke="#2e942e" stroke-width="1"/><rect x="1015" y="337.6" width="3" height="41.39999999999998" fill="#000" stroke="#349a34" stroke-width="1"/><path d="M1020.5 271.4 V333.6" stroke="#2e942e" stroke-width="1"/><rect x="1019" y="291.8" width="3" height="41.80000000000001" fill="#000" stroke="#349a34" stroke-width="1"/><path d="M1026.5 275.9 V307.1" stroke="#2e942e" stroke-width="1"/><path d="M1024.5 287.5 h4" stroke="#349a34" stroke-width="1"/><path d="M1030.5 281.2 V307.1" stroke="#2e942e" stroke-width="1"/><rect x="1029" y="291.8" width="3" height="10.0" fill="#d4f8d4" stroke="#3a9e3a" stroke-width="0.8"/><path d="M1035.5 297 V316.5" stroke="#2e942e" stroke-width="1"/><rect x="1034" y="297.1" width="3" height="10.0" fill="#d4f8d4" stroke="#3a9e3a" stroke-width="0.8"/><path d="M1040.5 291.8 V338.3" stroke="#2e942e" stroke-width="1"/><rect x="1039" y="312.4" width="3" height="9.400000000000034" fill="#d4f8d4" stroke="#3a9e3a" stroke-width="0.8"/><path d="M1045.5 296.5 V321.8" stroke="#2e942e" stroke-width="1"/><rect x="1044" y="301.8" width="3" height="15.899999999999977" fill="#000" stroke="#349a34" stroke-width="1"/><path d="M1050.5 290 V317.7" stroke="#2e942e" stroke-width="1"/><rect x="1049" y="297.1" width="3" height="20.599999999999966" fill="#d4f8d4" stroke="#3a9e3a" stroke-width="0.8"/><path d="M1055.5 286.5 V317.7" stroke="#2e942e" stroke-width="1"/><rect x="1054" y="297.1" width="3" height="15.299999999999955" fill="#000" stroke="#349a34" stroke-width="1"/><path d="M1060.5 271.4 V301.8" stroke="#2e942e" stroke-width="1"/><rect x="1059" y="286.9" width="3" height="14.900000000000034" fill="#000" stroke="#349a34" stroke-width="1"/><path d="M1065.5 241.5 V287" stroke="#2e942e" stroke-width="1"/><rect x="1064" y="241.5" width="3" height="40.10000000000002" fill="#000" stroke="#349a34" stroke-width="1"/><path d="M1070.5 246.5 V266.5" stroke="#2e942e" stroke-width="1"/><rect x="1069" y="246.5" width="3" height="8.800000000000011" fill="#d4f8d4" stroke="#3a9e3a" stroke-width="0.8"/><path d="M1075.5 220.2 V251.5" stroke="#2e942e" stroke-width="1"/><rect x="1074" y="220.2" width="3" height="31.30000000000001" fill="#000" stroke="#349a34" stroke-width="1"/><path d="M1080.5 160 V225.2" stroke="#2e942e" stroke-width="1"/><rect x="1079" y="179.6" width="3" height="45.599999999999994" fill="#000" stroke="#349a34" stroke-width="1"/><path d="M1085.5 185 V220.2" stroke="#2e942e" stroke-width="1"/><rect x="1084" y="185" width="3" height="31.400000000000006" fill="#d4f8d4" stroke="#3a9e3a" stroke-width="0.8"/><path d="M1090.5 180 V236.5" stroke="#2e942e" stroke-width="1"/><rect x="1089" y="210" width="3" height="15.199999999999989" fill="#d4f8d4" stroke="#3a9e3a" stroke-width="0.8"/><path d="M1095.5 220 V250" stroke="#2e942e" stroke-width="1"/><rect x="1094" y="220.7" width="3" height="20.80000000000001" fill="#d4f8d4" stroke="#3a9e3a" stroke-width="0.8"/><path d="M1100.5 205 V250" stroke="#2e942e" stroke-width="1"/><rect x="1099" y="210" width="3" height="36.5" fill="#000" stroke="#349a34" stroke-width="1"/><path d="M1105.5 185 V236.5" stroke="#2e942e" stroke-width="1"/><rect x="1104" y="205" width="3" height="31.5" fill="#d4f8d4" stroke="#3a9e3a" stroke-width="0.8"/><path d="M1110.5 225.2 V245.2" stroke="#2e942e" stroke-width="1"/><path d="M1108.5 236.5 h4" stroke="#349a34" stroke-width="1"/><path d="M1115.5 216.4 V251.5" stroke="#2e942e" stroke-width="1"/><rect x="1114" y="236.5" width="3" height="8.699999999999989" fill="#d4f8d4" stroke="#3a9e3a" stroke-width="0.8"/><path d="M1120.5 246 V287.8" stroke="#2e942e" stroke-width="1"/><rect x="1119" y="246.5" width="3" height="35.10000000000002" fill="#d4f8d4" stroke="#3a9e3a" stroke-width="0.8"/><path d="M1125.5 256.5 V276.6" stroke="#2e942e" stroke-width="1"/><rect x="1124" y="272.3" width="3" height="4.300000000000011" fill="#000" stroke="#349a34" stroke-width="1"/><path d="M1130.5 261.5 V301.6" stroke="#2e942e" stroke-width="1"/><rect x="1129" y="272.3" width="3" height="4.300000000000011" fill="#000" stroke="#349a34" stroke-width="1"/><path d="M1135.5 236.5 V276.6" stroke="#2e942e" stroke-width="1"/><rect x="1134" y="241.5" width="3" height="35.10000000000002" fill="#000" stroke="#349a34" stroke-width="1"/><path d="M1140.5 225.2 V246.5" stroke="#2e942e" stroke-width="1"/><path d="M1138.5 236.5 h4" stroke="#349a34" stroke-width="1"/><path d="M1145.5 195.1 V230.2" stroke="#2e942e" stroke-width="1"/><rect x="1144" y="205" width="3" height="25.19999999999999" fill="#000" stroke="#349a34" stroke-width="1"/><path d="M1150.5 210 V222.7" stroke="#2e942e" stroke-width="1"/><path d="M1148.5 210.5 h4" stroke="#349a34" stroke-width="1"/><path d="M1155.5 205 V215.7" stroke="#2e942e" stroke-width="1"/><rect x="1154" y="205" width="3" height="10.699999999999989" fill="#d4f8d4" stroke="#3a9e3a" stroke-width="0.8"/><path d="M341.7,157.5 C343.9,158.9 350.3,162.1 355,166 C359.7,169.9 364.7,175.5 370,181 C375.3,186.5 382.5,196.0 386.6,198.8 C390.7,201.6 391.1,196.4 394.7,197.7 C398.3,199.0 404.3,204.7 408,206.5 C411.7,208.3 412.6,208.3 416.8,208.4 C421.0,208.5 429.3,207.7 433,207.3 C436.7,206.9 436.8,205.6 439,205.8 C441.2,206.0 441.1,205.5 446.3,208.7 C451.5,211.9 456.1,222.3 470,225 C483.9,227.7 516.7,227.1 530,225 C543.3,222.9 544.2,216.4 550,212.7 C555.8,209.0 559.7,205.7 565,203 C570.3,200.3 576.3,199.7 582,196.5 C587.7,193.3 593.7,185.8 599.2,184 C604.7,182.2 610.2,185.5 615,186 C619.8,186.5 623.8,185.3 628,187 C632.2,188.7 635.8,192.2 640,196 C644.2,199.8 643.0,202.7 653,210 C663.0,217.3 679.4,233.1 700,240 C720.6,246.9 762.0,248.6 776.8,251.2 C791.6,253.8 785.3,254.3 788.6,255.3 C791.9,256.3 793.1,257.2 796.8,257.1 C800.5,257.0 807.7,254.7 811,254.7 C814.3,254.7 814.3,255.6 816.8,257.1 C819.3,258.6 823.2,261.2 826.2,263.6 C829.2,266.1 831.4,268.8 834.5,271.8 C837.6,274.8 841.9,279.7 845,281.8 C848.1,283.9 850.3,282.7 853,284.3 C855.7,285.9 857.8,287.9 861.2,291.5 C864.6,295.1 869.5,300.8 873.6,306 C877.7,311.2 881.9,317.0 886,322.5 C890.1,328.0 894.3,333.5 898.4,339 C902.5,344.5 906.9,351.4 910.7,355.5 C914.5,359.6 917.7,361.5 921,363.7 C924.3,365.9 926.6,368.8 930.3,368.9 C934.0,369.0 937.2,365.4 943,364.3 C948.8,363.2 958.8,362.2 965,362.5 C971.2,362.8 974.5,364.5 980,366 C985.5,367.5 992.5,369.2 998,371.7 C1003.5,374.2 1008.7,380.2 1013,380.8 C1017.3,381.4 1018.3,381.8 1024,375 C1029.7,368.2 1040.8,349.5 1047,340 C1053.2,330.5 1056.8,325.7 1061.5,318 C1066.2,310.3 1069.8,302.8 1075,294 C1080.2,285.2 1086.9,272.9 1092.7,265 C1098.5,257.1 1105.1,250.7 1110,246.5 C1114.9,242.3 1117.8,241.5 1122,240 C1126.2,238.5 1131.2,238.5 1135,237.7 C1138.8,236.9 1140.8,235.2 1145,235.2 C1149.2,235.2 1157.5,237.3 1160,237.7" fill="none" stroke="#b02828" stroke-width="0.9"/></svg>
<div class="t" style="left:344px;top:68.20px;font-size:7px;color:#f4f4f4;font-weight:bold;background:#000;transform:scaleX(0.82);transform-origin:left center;">EURUSD,M5&nbsp;&nbsp;1.2693 1.2693 1.2691 1.2691</div>
<div class="t" style="left:344px;top:202.30px;font-size:7px;color:#f4f4f4;font-weight:bold;transform:scaleX(0.85);transform-origin:left center;">#7570280 sell</div>
<div class="t" style="left:1173.3px;top:64.40px;font-size:7px;color:#f4f4f4;font-weight:bold;transform:scaleX(0.83);transform-origin:left center;">1.2720</div>
<div class="t" style="left:1173.3px;top:89.84px;font-size:7px;color:#f4f4f4;font-weight:bold;transform:scaleX(0.83);transform-origin:left center;">1.2715</div>
<div class="t" style="left:1173.3px;top:115.28px;font-size:7px;color:#f4f4f4;font-weight:bold;transform:scaleX(0.83);transform-origin:left center;">1.2710</div>
<div class="t" style="left:1173.3px;top:140.72px;font-size:7px;color:#f4f4f4;font-weight:bold;transform:scaleX(0.83);transform-origin:left center;">1.2705</div>
<div class="t" style="left:1173.3px;top:166.16px;font-size:7px;color:#f4f4f4;font-weight:bold;transform:scaleX(0.83);transform-origin:left center;">1.2700</div>
<div class="t" style="left:1173.3px;top:191.60px;font-size:7px;color:#f4f4f4;font-weight:bold;transform:scaleX(0.83);transform-origin:left center;">1.2695</div>
<div class="t" style="left:1173.3px;top:217.04px;font-size:7px;color:#f4f4f4;font-weight:bold;transform:scaleX(0.83);transform-origin:left center;">1.2690</div>
<div class="t" style="left:1173.3px;top:242.48px;font-size:7px;color:#f4f4f4;font-weight:bold;transform:scaleX(0.83);transform-origin:left center;">1.2685</div>
<div class="t" style="left:1173.3px;top:267.92px;font-size:7px;color:#f4f4f4;font-weight:bold;transform:scaleX(0.83);transform-origin:left center;">1.2680</div>
<div class="t" style="left:1173.3px;top:293.36px;font-size:7px;color:#f4f4f4;font-weight:bold;transform:scaleX(0.83);transform-origin:left center;">1.2675</div>
<div class="t" style="left:1173.3px;top:318.80px;font-size:7px;color:#f4f4f4;font-weight:bold;transform:scaleX(0.83);transform-origin:left center;">1.2670</div>
<div class="t" style="left:1173.3px;top:344.24px;font-size:7px;color:#f4f4f4;font-weight:bold;transform:scaleX(0.83);transform-origin:left center;">1.2665</div>
<div class="t" style="left:1173.3px;top:369.68px;font-size:7px;color:#f4f4f4;font-weight:bold;transform:scaleX(0.83);transform-origin:left center;">1.2660</div>
<div class="t" style="left:1173.3px;top:395.12px;font-size:7px;color:#f4f4f4;font-weight:bold;transform:scaleX(0.83);transform-origin:left center;">1.2655</div>
<div class="t" style="left:1173.3px;top:420.56px;font-size:7px;color:#f4f4f4;font-weight:bold;transform:scaleX(0.83);transform-origin:left center;">1.2650</div>
<div class="t" style="left:1173.3px;top:446.00px;font-size:7px;color:#f4f4f4;font-weight:bold;transform:scaleX(0.83);transform-origin:left center;">1.2645</div>
<div class="b" style="left:1170px;top:211.6px;width:22.5px;height:6.9px;background:#fff;"></div>
<div class="t" style="left:1173px;top:211.10px;font-size:7px;color:#000;font-weight:bold;transform:scaleX(0.83);transform-origin:left center;">1.2691</div>
<div class="t" style="left:340.5px;top:476.98px;font-size:7.2px;color:#ffffff;transform:scaleX(0.8);transform-origin:left center;">17 May 2012</div>
<div class="t" style="left:381.0px;top:476.98px;font-size:7.2px;color:#ffffff;transform:scaleX(0.8);transform-origin:left center;">17 May 23:40</div>
<div class="t" style="left:420.64px;top:476.98px;font-size:7.2px;color:#ffffff;transform:scaleX(0.8);transform-origin:left center;">18 May 00:20</div>
<div class="t" style="left:460.28px;top:476.98px;font-size:7.2px;color:#ffffff;transform:scaleX(0.8);transform-origin:left center;">18 May 01:00</div>
<div class="t" style="left:499.92px;top:476.98px;font-size:7.2px;color:#ffffff;transform:scaleX(0.8);transform-origin:left center;">18 May 01:40</div>
<div class="t" style="left:539.56px;top:476.98px;font-size:7.2px;color:#ffffff;transform:scaleX(0.8);transform-origin:left center;">18 May 02:20</div>
<div class="t" style="left:579.2px;top:476.98px;font-size:7.2px;color:#ffffff;transform:scaleX(0.8);transform-origin:left center;">18 May 03:00</div>
<div class="t" style="left:618.84px;top:476.98px;font-size:7.2px;color:#ffffff;transform:scaleX(0.8);transform-origin:left center;">18 May 03:40</div>
<div class="t" style="left:658.48px;top:476.98px;font-size:7.2px;color:#ffffff;transform:scaleX(0.8);transform-origin:left center;">18 May 04:20</div>
<div class="t" style="left:698.12px;top:476.98px;font-size:7.2px;color:#ffffff;transform:scaleX(0.8);transform-origin:left center;">18 May 05:00</div>
<div class="t" style="left:737.76px;top:476.98px;font-size:7.2px;color:#ffffff;transform:scaleX(0.8);transform-origin:left center;">18 May 05:40</div>
<div class="t" style="left:777.4px;top:476.98px;font-size:7.2px;color:#ffffff;transform:scaleX(0.8);transform-origin:left center;">18 May 06:20</div>
<div class="t" style="left:817.04px;top:476.98px;font-size:7.2px;color:#ffffff;transform:scaleX(0.8);transform-origin:left center;">18 May 07:00</div>
<div class="t" style="left:856.6800000000001px;top:476.98px;font-size:7.2px;color:#ffffff;transform:scaleX(0.8);transform-origin:left center;">18 May 07:40</div>
<div class="t" style="left:896.32px;top:476.98px;font-size:7.2px;color:#ffffff;transform:scaleX(0.8);transform-origin:left center;">18 May 08:20</div>
<div class="t" style="left:935.96px;top:476.98px;font-size:7.2px;color:#ffffff;transform:scaleX(0.8);transform-origin:left center;">18 May 09:00</div>
<div class="t" style="left:975.6px;top:476.98px;font-size:7.2px;color:#ffffff;transform:scaleX(0.8);transform-origin:left center;">18 May 09:40</div>
<div class="t" style="left:1015.24px;top:476.98px;font-size:7.2px;color:#ffffff;transform:scaleX(0.8);transform-origin:left center;">18 May 10:20</div>
<div class="t" style="left:1054.88px;top:476.98px;font-size:7.2px;color:#ffffff;transform:scaleX(0.8);transform-origin:left center;">18 May 11:00</div>
<div class="t" style="left:1094.52px;top:476.98px;font-size:7.2px;color:#ffffff;transform:scaleX(0.8);transform-origin:left center;">18 May 11:40</div>
<div class="t" style="left:1134.1599999999999px;top:476.98px;font-size:7.2px;color:#ffffff;transform:scaleX(0.8);transform-origin:left center;">18 May 12:20</div>
<div class="b" style="left:426.3px;top:213.3px;width:347px;height:252px;border-radius:5px 5px 3px 3px;background:#161514;border:1px solid #4a4846;"></div>
<div class="b" style="left:427.3px;top:214.3px;width:345px;height:16.5px;border-radius:4px 4px 0 0;background:linear-gradient(90deg,#7e7873 0px,#86807b 30px,#7a746f 60px,#4e4a44 90px,#3e463c 110px,#40483e 130px,#463a36 160px,#42302e 200px,#3e3431 260px,#3e3633 300px,#3a3430 345px);border-top:1px solid #aaa49f;"></div>
<div class="b" style="left:427.3px;top:222px;width:345px;height:9px;background:linear-gradient(rgba(0,0,0,0),rgba(20,18,16,0.5));"></div>
<div class="b" style="left:445px;top:216px;width:4px;height:14px;background:#b0d8b0;filter:blur(1.5px);opacity:0.6;"></div>
<div class="b" style="left:488px;top:216px;width:28px;height:14px;background:#3a7a3a;filter:blur(4px);opacity:0.55;"></div>
<div class="b" style="left:535px;top:216px;width:25px;height:14px;background:#602020;filter:blur(4px);opacity:0.4;"></div>
<div class="b" style="left:612px;top:216px;width:5px;height:14px;background:#6a9a6a;filter:blur(1.5px);opacity:0.7;"></div>
<div class="b" style="left:632px;top:216px;width:4px;height:14px;background:#80b080;filter:blur(1.5px);opacity:0.7;"></div>
<div class="b" style="left:655px;top:216px;width:14px;height:12px;background:#703030;filter:blur(3px);opacity:0.55;"></div>
<div class="b" style="left:769.5px;top:218px;width:3px;height:42px;background:#7ab07a;filter:blur(1px);opacity:0.6;"></div>
<div class="t" style="left:431.3px;top:217.4px;font-size:7.25px;color:#141414;text-shadow:0 0 2px #c4c0bc,0 0 4px #aaa6a2,0 0 8px #9a9692;">Открыть Счет</div>
<div class="b" style="left:722.5px;top:213.8px;width:18px;height:11.7px;border:1px solid #8a8682;border-top:none;border-radius:0 0 0 3px;background:linear-gradient(#5a5550,#47423e);"></div>
<div class="b" style="left:740px;top:213.8px;width:29px;height:11.7px;border:1px solid #8a8682;border-top:none;border-radius:0 0 3px 0;background:linear-gradient(#5a5550,#47423e);"></div>
<div class="t" style="left:728.8px;top:213.3px;font-size:8.5px;color:#fff;font-weight:bold;">?</div>
<div class="t" style="left:750.5px;top:213.2px;font-size:9px;color:#fff;font-weight:bold;">✕</div>
<div class="b" style="left:429.3px;top:229.8px;width:341px;height:232.5px;background:#f0f0f0;border:1.5px solid #707070;"></div>
<div class="b" style="left:431.5px;top:231.5px;width:337px;height:35.5px;background:#fff;border-bottom:1px solid #a8a8a8;"></div>
<div class="t" style="left:444.8px;top:236.96px;font-size:7.4px;color:#000;font-weight:bold;">Регистрация</div>
<div class="t" style="left:457.8px;top:246.72px;font-size:6.8px;color:#000;">Подождите, пожалуйста</div>
<div class="t" style="right:701.7px;top:284.22px;font-size:6.8px;color:#000;">Имя:</div>
<div class="t" style="right:701.7px;top:299.22px;font-size:6.8px;color:#000;">Тип счета:</div>
<div class="t" style="right:701.7px;top:313.72px;font-size:6.8px;color:#000;">Депозит:</div>
<div class="t" style="right:701.7px;top:328.92px;font-size:6.8px;color:#000;">Сервер:</div>
<div class="t" style="right:701.7px;top:369.42px;font-size:6.8px;color:#000;">Логин:</div>
<div class="t" style="right:701.7px;top:385.32px;font-size:6.8px;color:#000;">Пароль:</div>
<div class="t" style="right:701.7px;top:399.92px;font-size:6.8px;color:#000;">Инвестор:</div>
<div class="t" style="left:502.7px;top:284.34px;font-size:6.6px;color:#000;">agatha</div>
<div class="t" style="left:502.7px;top:299.34px;font-size:6.6px;color:#000;">demoStandard (1:100)</div>
<div class="t" style="left:502.7px;top:313.84px;font-size:6.6px;color:#000;">5000</div>
<div class="t" style="left:502.7px;top:329.04px;font-size:6.6px;color:#000;">InstaForex-Contest.com</div>
<div class="b" style="left:502.7px;top:344.3px;width:258.5px;height:10px;border:1px solid #b8b8b8;border-radius:2px;background:linear-gradient(#f4f4f4,#dcdcdc 50%,#d0d0d0 51%,#e0e0e0);"></div>
<div class="b" style="left:437px;top:360.3px;width:325px;height:2px;background:#a8a8a8;border-bottom:1px solid #fff;"></div>
<div class="t" style="left:567.1px;top:399.92px;font-size:6.8px;color:#000;">(пароль только для просмотра)</div>
<div class="t" style="left:502.7px;top:415.31px;font-size:6.82px;color:#000;">Пожалуйста, храните эти данные в безопасном месте.</div>
<div class="b" style="left:431.5px;top:432px;width:337px;height:2px;background:#a8a8a8;border-bottom:1px solid #fff;"></div>
<div class="b" style="left:618px;top:441.5px;width:44.5px;height:13px;border:1px solid #c8c8c8;border-radius:2px;background:#f4f4f4;"></div>
<div class="b" style="left:664.5px;top:441.5px;width:45px;height:13px;border:1px solid #c8c8c8;border-radius:2px;background:#f4f4f4;"></div>
<div class="b" style="left:717px;top:441.5px;width:46px;height:13px;border:1px solid #707070;border-radius:2px;background:linear-gradient(#f6f6f6,#e6e6e6 50%,#d8d8d8 51%,#e4e4e4);"></div>
<div class="t" style="left:640.25px;top:443.86px;font-size:6.9px;color:#a0a0a0;transform:translateX(-50%);">&lt; Назад</div>
<div class="t" style="left:687px;top:443.86px;font-size:6.9px;color:#a0a0a0;transform:translateX(-50%);">Готово</div>
<div class="t" style="left:740px;top:443.86px;font-size:6.9px;color:#000;transform:translateX(-50%);">Отмена</div>
<div class="b" style="left:338px;top:487px;width:856px;height:13px;background:#f0f0f0;"></div>
<div class="b" style="left:340.5px;top:487px;width:49.5px;height:12.5px;background:#fff;border:1px solid #404040;border-top:none;border-bottom-width:1.5px;"></div>
<div class="t" style="left:347px;top:490.00px;font-size:7px;color:#000;transform:scaleX(0.86);transform-origin:left center;">EURUSD,M5</div>
<div class="t" style="left:396.4px;top:490.00px;font-size:7px;color:#8a8a8a;transform:scaleX(0.89);transform-origin:left center;">USDCHF,H4</div>
<div class="t" style="left:447px;top:490.00px;font-size:7px;color:#8a8a8a;transform:scaleX(0.86);transform-origin:left center;">GBPUSD,H4</div>
<div class="t" style="left:496px;top:490.00px;font-size:7px;color:#8a8a8a;transform:scaleX(0.87);transform-origin:left center;">USDJPY,H4</div>
<div class="b" style="left:439px;top:489.5px;width:1px;height:8px;background:#a0a0a0;"></div>
<div class="b" style="left:489px;top:489.5px;width:1px;height:8px;background:#a0a0a0;"></div>
<div class="b" style="left:536px;top:489.5px;width:1px;height:8px;background:#a0a0a0;"></div>
<svg style="left:1176px;top:490px" width="16" height="8" viewBox="0 0 16 8"><path d="M4 1 L1 4 L4 7z" fill="#8a8a8a"/><path d="M12 1 L15 4 L12 7z" fill="#8a8a8a"/></svg>
<div class="b" style="left:5px;top:500px;width:1189px;height:160px;background:#f0f0f0;"></div>
<div class="b" style="left:5px;top:502px;width:10px;height:157px;background:linear-gradient(90deg,#d0dcea,#c4d2e2);"></div>
<div class="t" style="left:6px;top:500px;font-size:9px;color:#000;font-weight:bold;">×</div>
<div class="t" style="left:5.5px;top:658.5px;font-size:7px;color:#3e4c60;transform:rotate(-90deg);transform-origin:left top;">Терминал</div>
<div class="b" style="left:14.5px;top:502.5px;width:1178.5px;height:144.5px;background:#fff;border-top:1px solid #a0a0a0;border-left:1px solid #a0a0a0;border-bottom:1.5px solid #303030;border-right:1px solid #a8a8a8;"></div>
<div class="b" style="left:15.5px;top:503.5px;width:1176.5px;height:14.5px;background:linear-gradient(#fff 0%,#fafafa 50%,#eeeeee 100%);border-bottom:1px solid #d0d0d0;"></div>
<div class="b" style="left:94.8px;top:503.5px;width:1px;height:14.5px;background:#e0e0e0;"></div>
<div class="b" style="left:447.8px;top:503.5px;width:1px;height:14.5px;background:#e0e0e0;"></div>
<div class="t" style="left:19px;top:506.66px;font-size:6.9px;color:#1a1a1a;">Время</div>
<div class="t" style="left:99.6px;top:506.66px;font-size:6.9px;color:#1a1a1a;">От</div>
<div class="t" style="left:452.5px;top:506.66px;font-size:6.9px;color:#1a1a1a;">Тема</div>
<div class="b" style="left:15.5px;top:518.2px;width:1176.5px;height:12.42px;background:#e9e9e9;border-bottom:1px solid #d4d4d4;"></div>
<svg style="left:16px;top:521.2px" width="10" height="7" viewBox="0 0 10 7"><rect x="0.5" y="0.5" width="8" height="5.5" fill="#e0cc88" stroke="#a89050" stroke-width="0.8"/><path d="M0.5 0.8 L4.5 3.5 L8.5 0.8" stroke="#f4eccc" stroke-width="0.9" fill="none"/></svg>
<div class="t" style="left:29px;top:520.57px;font-size:6.55px;color:#000;font-weight:bold;">2012.05.18 12:38</div>
<div class="t" style="left:97.9px;top:520.51px;font-size:6.65px;color:#000;font-weight:bold;">InstaForex Companies Group</div>
<div class="t" style="left:451.8px;top:520.54px;font-size:6.6px;color:#000;font-weight:bold;">Registration</div>
<div class="b" style="left:15.5px;top:530.62px;width:1176.5px;height:12.42px;background:#ffffff;border-bottom:1px solid #d4d4d4;"></div>
<svg style="left:16px;top:533.6px" width="10" height="7" viewBox="0 0 10 7"><rect x="0.5" y="0.5" width="8" height="5.5" fill="#e0cc88" stroke="#a89050" stroke-width="0.8"/><path d="M0.5 0.8 L4.5 3.5 L8.5 0.8" stroke="#f4eccc" stroke-width="0.9" fill="none"/></svg>
<div class="t" style="left:29px;top:532.99px;font-size:6.55px;color:#000;font-weight:bold;">2012.05.11 12:37</div>
<div class="t" style="left:97.9px;top:532.93px;font-size:6.65px;color:#000;font-weight:bold;">InstaForex Companies Group</div>
<div class="t" style="left:451.8px;top:532.96px;font-size:6.6px;color:#000;font-weight:bold;">Registration</div>
<div class="b" style="left:15.5px;top:543.0400000000001px;width:1176.5px;height:12.42px;background:#e9e9e9;border-bottom:1px solid #d4d4d4;"></div>
<svg style="left:16px;top:545.5px" width="10" height="8" viewBox="0 0 10 8"><path d="M0.5 2.8 L4.5 0.6 L8.5 2.8 V7 H0.5Z" fill="#a8cdec" stroke="#3a78b8" stroke-width="0.9"/><path d="M0.8 3.5 L4.5 5.8 L8.2 3.5" stroke="#eaf4fc" stroke-width="0.9" fill="none"/></svg>
<div class="t" style="left:29px;top:545.41px;font-size:6.55px;color:#000;">2012.01.12 12:43</div>
<div class="t" style="left:97.9px;top:545.11px;font-size:7.05px;color:#000;">InstaForex Companies Group</div>
<div class="t" style="left:451.8px;top:545.20px;font-size:6.9px;color:#000;">Registration</div>
<div class="b" style="left:15.5px;top:555.46px;width:1176.5px;height:12.42px;background:#ffffff;border-bottom:1px solid #d4d4d4;"></div>
<svg style="left:16px;top:558.0px" width="10" height="8" viewBox="0 0 10 8"><path d="M0.5 2.8 L4.5 0.6 L8.5 2.8 V7 H0.5Z" fill="#a8cdec" stroke="#3a78b8" stroke-width="0.9"/><path d="M0.8 3.5 L4.5 5.8 L8.2 3.5" stroke="#eaf4fc" stroke-width="0.9" fill="none"/></svg>
<div class="t" style="left:29px;top:557.83px;font-size:6.55px;color:#000;">2011.07.06 09:35</div>
<div class="t" style="left:97.9px;top:557.53px;font-size:7.05px;color:#000;">InstaForex Companies Group</div>
<div class="t" style="left:451.8px;top:557.62px;font-size:6.9px;color:#000;">Registration</div>
<div class="b" style="left:15.5px;top:567.88px;width:1176.5px;height:12.42px;background:#e9e9e9;border-bottom:1px solid #d4d4d4;"></div>
<svg style="left:16px;top:570.4px" width="10" height="8" viewBox="0 0 10 8"><path d="M0.5 2.8 L4.5 0.6 L8.5 2.8 V7 H0.5Z" fill="#a8cdec" stroke="#3a78b8" stroke-width="0.9"/><path d="M0.8 3.5 L4.5 5.8 L8.2 3.5" stroke="#eaf4fc" stroke-width="0.9" fill="none"/></svg>
<div class="t" style="left:29px;top:570.25px;font-size:6.55px;color:#000;">2011.01.01 12:00</div>
<div class="t" style="left:97.9px;top:569.95px;font-size:7.05px;color:#000;">InstaForex Companies Group</div>
<div class="t" style="left:451.8px;top:569.83px;font-size:7.25px;color:#000;">Что такое автоматический трейдинг?</div>
<div class="b" style="left:15.5px;top:580.3000000000001px;width:1176.5px;height:12.42px;background:#ffffff;border-bottom:1px solid #d4d4d4;"></div>
<svg style="left:16px;top:582.8px" width="10" height="8" viewBox="0 0 10 8"><path d="M0.5 2.8 L4.5 0.6 L8.5 2.8 V7 H0.5Z" fill="#a8cdec" stroke="#3a78b8" stroke-width="0.9"/><path d="M0.8 3.5 L4.5 5.8 L8.2 3.5" stroke="#eaf4fc" stroke-width="0.9" fill="none"/></svg>
<div class="t" style="left:29px;top:582.67px;font-size:6.55px;color:#000;">2011.01.01 12:00</div>
<div class="t" style="left:97.9px;top:582.37px;font-size:7.05px;color:#000;">InstaForex Companies Group</div>
<div class="t" style="left:451.8px;top:582.25px;font-size:7.25px;color:#000;">Мобильный трейдинг - это легко!</div>
<div class="b" style="left:15.5px;top:592.72px;width:1176.5px;height:12.42px;background:#e9e9e9;border-bottom:1px solid #d4d4d4;"></div>
<svg style="left:16px;top:595.2px" width="10" height="8" viewBox="0 0 10 8"><path d="M0.5 2.8 L4.5 0.6 L8.5 2.8 V7 H0.5Z" fill="#a8cdec" stroke="#3a78b8" stroke-width="0.9"/><path d="M0.8 3.5 L4.5 5.8 L8.2 3.5" stroke="#eaf4fc" stroke-width="0.9" fill="none"/></svg>
<div class="t" style="left:29px;top:595.09px;font-size:6.55px;color:#000;">2011.01.01 12:00</div>
<div class="t" style="left:97.9px;top:594.79px;font-size:7.05px;color:#000;">InstaForex Companies Group</div>
<div class="t" style="left:451.8px;top:594.67px;font-size:7.25px;color:#000;">Добро пожаловать!</div>
<div class="b" style="left:15.5px;top:605.1400000000001px;width:1176.5px;height:12.42px;background:#ffffff;border-bottom:1px solid #d4d4d4;"></div>
<svg style="left:16px;top:607.6px" width="10" height="8" viewBox="0 0 10 8"><path d="M0.5 2.8 L4.5 0.6 L8.5 2.8 V7 H0.5Z" fill="#a8cdec" stroke="#3a78b8" stroke-width="0.9"/><path d="M0.8 3.5 L4.5 5.8 L8.2 3.5" stroke="#eaf4fc" stroke-width="0.9" fill="none"/></svg>
<div class="t" style="left:29px;top:607.51px;font-size:6.55px;color:#000;">2007.09.25 15:53</div>
<div class="t" style="left:97.9px;top:607.21px;font-size:7.05px;color:#000;">InstaForex Companies Group</div>
<div class="t" style="left:451.8px;top:607.09px;font-size:7.25px;color:#000;">Добро пожаловать!</div>
<div class="b" style="left:94.8px;top:518.2px;width:1px;height:99.4px;background:#e4e4e4;"></div>
<div class="b" style="left:447.8px;top:518.2px;width:1px;height:99.4px;background:#e4e4e4;"></div>
<div class="b" style="left:195.6px;top:646.5px;width:62.5px;height:11.5px;background:#fff;border:1px solid #404040;border-top:none;border-bottom-width:1.5px;"></div>
<div class="t" style="left:22.5px;top:648.38px;font-size:6.87px;color:#6e6e6e;">Торговля</div>
<div class="t" style="left:63px;top:648.38px;font-size:6.87px;color:#6e6e6e;">История Счета</div>
<div class="t" style="left:123px;top:648.38px;font-size:6.87px;color:#6e6e6e;">Новости</div>
<div class="t" style="left:161px;top:648.38px;font-size:6.87px;color:#6e6e6e;">Сигналы</div>
<div class="t" style="left:201px;top:648.38px;font-size:6.87px;color:#000;">Почтовый ящик</div>
<div class="t" style="left:263.4px;top:648.38px;font-size:6.87px;color:#6e6e6e;">Эксперты</div>
<div class="t" style="left:307px;top:648.38px;font-size:6.87px;color:#6e6e6e;">Журнал</div>
<div class="b" style="left:57.5px;top:648.5px;width:1px;height:8px;background:#909090;"></div>
<div class="b" style="left:117.5px;top:648.5px;width:1px;height:8px;background:#909090;"></div>
<div class="b" style="left:156px;top:648.5px;width:1px;height:8px;background:#909090;"></div>
<div class="b" style="left:301px;top:648.5px;width:1px;height:8px;background:#909090;"></div>
<div class="b" style="left:338px;top:648.5px;width:1px;height:8px;background:#909090;"></div>
<div class="b" style="left:5px;top:660px;width:1189px;height:13.5px;background:linear-gradient(#f4f4f4,#ececec);border-top:1px solid #d8d8d8;"></div>
<div class="t" style="left:6.3px;top:664.04px;font-size:7.1px;color:#000;">Для справки, нажмите F1</div>
<div class="b" style="left:746px;top:662px;width:1px;height:10px;background:#b0b0b0;border-right:1px solid #fff;"></div>
<div class="b" style="left:817px;top:662px;width:1px;height:10px;background:#b0b0b0;border-right:1px solid #fff;"></div>
<div class="b" style="left:880px;top:662px;width:1px;height:10px;background:#b0b0b0;border-right:1px solid #fff;"></div>
<div class="b" style="left:924px;top:662px;width:1px;height:10px;background:#b0b0b0;border-right:1px solid #fff;"></div>
<div class="b" style="left:968px;top:662px;width:1px;height:10px;background:#b0b0b0;border-right:1px solid #fff;"></div>
<div class="b" style="left:1010px;top:662px;width:1px;height:10px;background:#b0b0b0;border-right:1px solid #fff;"></div>
<div class="b" style="left:1053px;top:662px;width:1px;height:10px;background:#b0b0b0;border-right:1px solid #fff;"></div>
<div class="b" style="left:1095px;top:662px;width:1px;height:10px;background:#b0b0b0;border-right:1px solid #fff;"></div>
<div class="t" style="left:748.5px;top:664.13px;font-size:6.95px;color:#000;">IFX One Click Trading</div>
<svg style="left:1097px;top:663px" width="16" height="8" viewBox="0 0 16 8"><rect x="0" y="0" width="1.2" height="8" fill="#58a030"/><rect x="2" y="1" width="1.2" height="7" fill="#58a030"/><rect x="4" y="0" width="1.2" height="8" fill="#58a030"/><rect x="6" y="1" width="1.2" height="7" fill="#58a030"/><rect x="8" y="0" width="1.2" height="8" fill="#58a030"/><rect x="10" y="1" width="1.2" height="7" fill="#3a70a8"/><rect x="12" y="0" width="1.2" height="8" fill="#3a70a8"/><rect x="14" y="1" width="1.2" height="7" fill="#3a70a8"/></svg>
<div class="t" style="left:1142px;top:664.10px;font-size:7px;color:#000;">13/1 kb</div>
<div class="b" style="left:0px;top:673.5px;width:1200px;height:6px;background:#000;"></div>
<div class="b" style="left:1194.5px;top:0px;width:5.5px;height:679px;background:#000;"></div>
<div class="b" style="left:1193.6px;top:64.5px;width:1px;height:422.5px;background:#e0e0e0;"></div>
</div></body></html>
